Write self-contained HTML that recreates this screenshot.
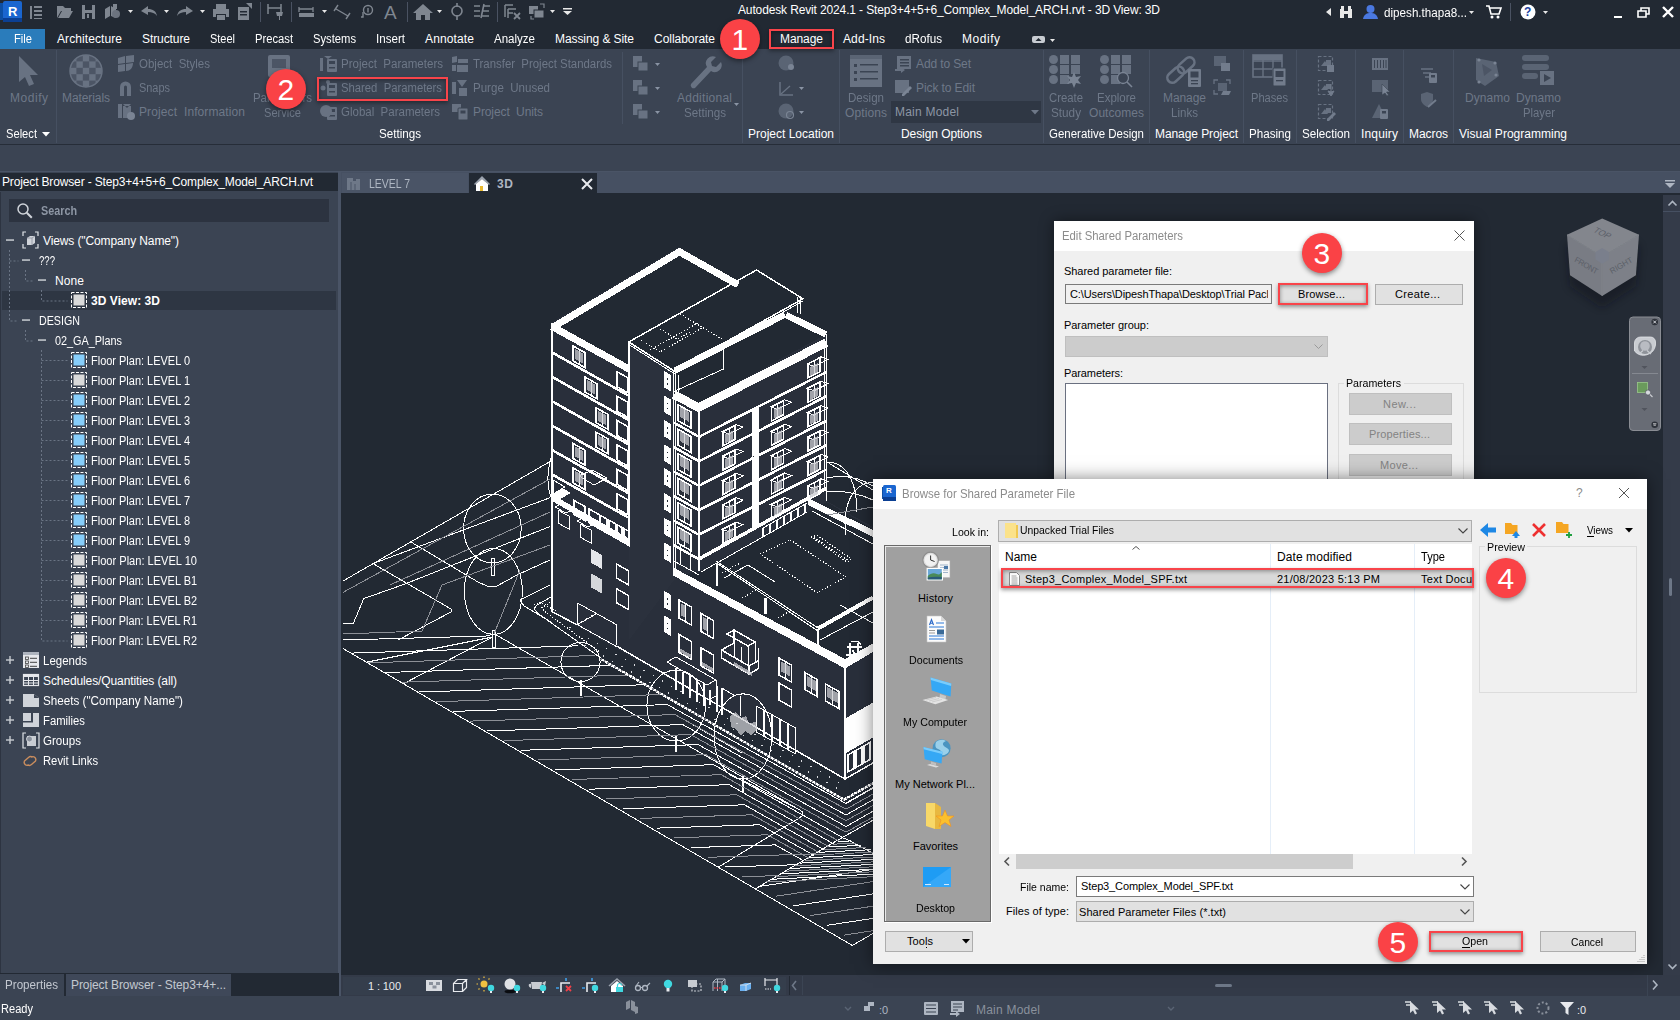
<!DOCTYPE html>
<html><head><meta charset="utf-8"><title>Autodesk Revit</title><style>
html,body{margin:0;padding:0;background:#222933;}
body{width:1680px;height:1020px;overflow:hidden;position:relative;font-family:"Liberation Sans",sans-serif;}
.t{position:absolute;white-space:pre;display:block;}
.b{position:absolute;display:block;box-sizing:border-box;}
</style></head><body>
<!-- p_top -->
<div class="b" style="left:0px;top:0px;width:1680px;height:49px;background:#222933;"></div>
<svg class="b" style="left:0px;top:0px;" width="24" height="26" viewBox="0 0 24 26"><rect x="0" y="3" width="5" height="17" fill="#0d4fa3"/><rect x="3" y="1" width="19" height="21" rx="2" fill="#1a66d0"/><rect x="3" y="18" width="19" height="4" fill="#0b3f93"/></svg>
<span class="t " style="left:8px;top:2.5px;font-size:13px;line-height:17px;color:#fff;font-weight:bold;">R</span>
<svg class="b" style="left:0px;top:0px;" width="700" height="27" viewBox="0 0 700 27"><rect x="30" y="6" width="2" height="13" fill="#7f8690"/><rect x="34" y="6" width="8" height="2" fill="#7f8690"/><rect x="34" y="10" width="8" height="2" fill="#7f8690"/><rect x="34" y="14" width="8" height="2" fill="#7f8690"/><rect x="34" y="18" width="8" height="1" fill="#7f8690"/><path d="M57 6h6l2 2h6v3h-10l-4 7z M58 18l4-7h11l-4 7z" fill="#7f8690"/><path d="M82 5h13v14h-13z" fill="#7f8690"/><rect x="85" y="5" width="7" height="5" fill="#222933"/><rect x="85" y="13" width="7" height="6" fill="#222933"/><rect x="87" y="14" width="2" height="4" fill="#7f8690"/><path d="M105 9l5-3v10l-5 3z M111 6l5 3v9l-5-2z M113 4h4v5h-4z" fill="#7f8690"/><circle cx="116" cy="14" r="4" fill="#6c737f"/><path d="M128 10h5l-2.500 3z" fill="#e8e8e8"/><path d="M141 11l7-5v3c5 0 8 2 9 7c-2-3-5-4-9-4v3z" fill="#7f8690"/><path d="M164 10h5l-2.500 3z" fill="#e8e8e8"/><path d="M193 11l-7-5v3c-5 0-8 2-9 7c2-3 5-4 9-4v3z" fill="#7f8690"/><path d="M200 10h5l-2.500 3z" fill="#e8e8e8"/><path d="M216 4h10v5h-10z M213 9h16v8h-3v-3h-10v3h-3z M217 15h8v5h-8z" fill="#7f8690"/><path d="M238 7h11v13h-11z" fill="#7f8690"/><path d="M246 3h6v6z" fill="#7f8690"/><rect x="240" y="11" width="7" height="1.500" fill="#222933"/><rect x="240" y="14" width="7" height="1.500" fill="#222933"/><rect x="260" y="2" width="1" height="20" fill="#4a5262"/><path d="M268 4v10M281 4v10M268 8h13" stroke="#7f8690" stroke-width="1.500" fill="none"/><path d="M276 12h7l-1 4h-2v4h-1v-4h-2z" fill="#7f8690"/><rect x="291" y="2" width="1" height="20" fill="#4a5262"/><path d="M299 7v5M313 7v5M299 9h14" stroke="#7f8690" stroke-width="1.300" fill="none"/><rect x="299" y="13" width="15" height="4" fill="#7f8690"/><path d="M322 10h5l-2.500 3z" fill="#e8e8e8"/><path d="M336 9l12 7M338 5l-4 6M350 13l-4 6" stroke="#7f8690" stroke-width="1.400" fill="none"/><circle cx="368" cy="10" r="4.500" fill="none" stroke="#7f8690" stroke-width="1.400"/><path d="M363 12v5h-2" stroke="#7f8690" stroke-width="1.400" fill="none"/><rect x="367.300" y="8" width="1.400" height="4.500" fill="#7f8690"/></svg>
<span class="t " style="left:384px;top:0.5px;font-size:19px;line-height:23px;color:#7f8690;letter-spacing:1.326px;">A</span>
<svg class="b" style="left:0px;top:0px;" width="700" height="27" viewBox="0 0 700 27"><rect x="407" y="2" width="1" height="20" fill="#4a5262"/><path d="M413 13l10-9l10 9h-3v7h-5v-5h-4v5h-5v-7z" fill="#7f8690"/><path d="M437 10h5l-2.500 3z" fill="#e8e8e8"/><circle cx="457" cy="11" r="5" fill="none" stroke="#7f8690" stroke-width="1.600"/><path d="M457 3v4M457 15v5" stroke="#7f8690" stroke-width="1.600"/><path d="M474 6h6M474 11h6M474 16h6M483 6h7M482 11h7M481 16h8M484 4l-3 14" stroke="#7f8690" stroke-width="1.600" fill="none"/><rect x="497" y="2" width="1" height="20" fill="#4a5262"/><path d="M505 5v12M505 5h8M508 9h8M508 13h5M508 9v9" stroke="#7f8690" stroke-width="1.500" fill="none"/><path d="M514 13l6 6M520 13l-6 6" stroke="#7f8690" stroke-width="1.800"/><rect x="529" y="6" width="9" height="8" fill="#7f8690"/><rect x="534" y="10" width="10" height="8" fill="#7f8690" stroke="#222933" stroke-width="1"/><path d="M540 4h4v4M531 16v3h3" stroke="#7f8690" stroke-width="1.200" fill="none"/><path d="M550 10h5l-2.500 3z" fill="#e8e8e8"/><rect x="563" y="8" width="9" height="1.500" fill="#e8e8e8"/><path d="M563 11h9l-4.500 4z" fill="#e8e8e8"/></svg>
<span class="t " style="left:738px;top:2px;font-size:12px;line-height:16px;color:#fff;letter-spacing:-0.136px;">Autodesk Revit 2024.1 - Step3+4+5+6_Complex_Model_ARCH.rvt - 3D View: 3D</span>
<svg class="b" style="left:0px;top:0px;" width="1680" height="27" viewBox="0 0 1680 27"><path d="M1331 8v8l-5-4z" fill="#e8e8e8"/><path d="M1340 9h4v9h-4z M1348 9h4v9h-4z M1341 6h3v3h-3z M1348 6h3v3h-3z M1344 11h4v3h-4z" fill="#e8e8e8"/><circle cx="1370.500" cy="9" r="4" fill="#4a78e0"/><path d="M1363 19c1-5 4-6 7.500-6s6.500 1 7.500 6z" fill="#4a78e0"/><path d="M1469 11h5l-2.500 3z" fill="#e8e8e8"/><path d="M1486 6h3l2 8h8l2-6h-11" stroke="#fff" stroke-width="1.600" fill="none"/><circle cx="1492" cy="17" r="1.500" fill="#fff"/><circle cx="1498" cy="17" r="1.500" fill="#fff"/><rect x="1510" y="3" width="1" height="18" fill="#4a5262"/><circle cx="1528" cy="12" r="7.500" fill="#fff"/><path d="M1543 11h5l-2.500 3z" fill="#e8e8e8"/><rect x="1614" y="16" width="8" height="2" fill="#fff"/><path d="M1638 11h8v6h-8z M1641 11v-3h8v6h-3" stroke="#fff" stroke-width="1.600" fill="none"/><path d="M1663 7l10 10M1673 7l-10 10" stroke="#fff" stroke-width="2.400"/></svg>
<span class="t " style="left:1524px;top:4px;font-size:12px;line-height:16px;color:#1a3fa0;font-weight:bold;">?</span>
<span class="t " style="left:1384px;top:5px;font-size:12px;line-height:16px;color:#fff;transform:scaleX(0.9719);transform-origin:0 50%;">dipesh.thapa8...</span>
<div class="b" style="left:0px;top:29px;width:45px;height:20px;background:#2a7cbb;"></div>
<span class="t " style="left:14px;top:31px;font-size:12px;line-height:16px;color:#fff;transform:scaleX(0.9309);transform-origin:0 50%;">File</span>
<span class="t " style="left:57px;top:31px;font-size:12px;line-height:16px;color:#fff;letter-spacing:0.089px;">Architecture</span>
<span class="t " style="left:142px;top:31px;font-size:12px;line-height:16px;color:#fff;letter-spacing:-0.086px;">Structure</span>
<span class="t " style="left:210px;top:31px;font-size:12px;line-height:16px;color:#fff;transform:scaleX(0.9140);transform-origin:0 50%;">Steel</span>
<span class="t " style="left:255px;top:31px;font-size:12px;line-height:16px;color:#fff;transform:scaleX(0.9341);transform-origin:0 50%;">Precast</span>
<span class="t " style="left:313px;top:31px;font-size:12px;line-height:16px;color:#fff;transform:scaleX(0.9346);transform-origin:0 50%;">Systems</span>
<span class="t " style="left:376px;top:31px;font-size:12px;line-height:16px;color:#fff;transform:scaleX(0.9663);transform-origin:0 50%;">Insert</span>
<span class="t " style="left:425px;top:31px;font-size:12px;line-height:16px;color:#fff;letter-spacing:0.137px;">Annotate</span>
<span class="t " style="left:494px;top:31px;font-size:12px;line-height:16px;color:#fff;transform:scaleX(0.9604);transform-origin:0 50%;">Analyze</span>
<span class="t " style="left:555px;top:31px;font-size:12px;line-height:16px;color:#fff;letter-spacing:-0.079px;">Massing &amp; Site</span>
<span class="t " style="left:654px;top:31px;font-size:12px;line-height:16px;color:#fff;letter-spacing:-0.037px;">Collaborate</span>
<span class="t " style="left:780px;top:31px;font-size:12px;line-height:16px;color:#fff;letter-spacing:-0.073px;">Manage</span>
<span class="t " style="left:843px;top:31px;font-size:12px;line-height:16px;color:#fff;letter-spacing:0.107px;">Add-Ins</span>
<span class="t " style="left:905px;top:31px;font-size:12px;line-height:16px;color:#fff;transform:scaleX(0.9731);transform-origin:0 50%;">dRofus</span>
<span class="t " style="left:962px;top:31px;font-size:12px;line-height:16px;color:#fff;letter-spacing:0.531px;">Modify</span>
<svg class="b" style="left:1030px;top:32px;" width="30" height="14" viewBox="0 0 30 14"><rect x="2" y="4" width="13" height="7" rx="2" fill="#c8ccd2"/><path d="M5.500 9l3-3l3 3z" fill="#222933"/><path d="M20 7h5l-2.500 3z" fill="#e8e8e8"/></svg>
<div class="b" style="left:0px;top:49px;width:1680px;height:96px;background:#3b4453;"></div>
<div class="b" style="left:0px;top:144px;width:1680px;height:1px;background:#262d38;"></div>
<div class="b" style="left:0px;top:145px;width:1680px;height:27px;background:#3b4453;"></div>
<div class="b" style="left:0px;top:171px;width:1680px;height:1px;background:#4a5466;"></div>
<div class="b" style="left:56px;top:50px;width:1px;height:93px;background:#465061;"></div>
<div class="b" style="left:742px;top:50px;width:1px;height:93px;background:#465061;"></div>
<div class="b" style="left:839px;top:50px;width:1px;height:93px;background:#465061;"></div>
<div class="b" style="left:1043px;top:50px;width:1px;height:93px;background:#465061;"></div>
<div class="b" style="left:1149px;top:50px;width:1px;height:93px;background:#465061;"></div>
<div class="b" style="left:1243px;top:50px;width:1px;height:93px;background:#465061;"></div>
<div class="b" style="left:1296px;top:50px;width:1px;height:93px;background:#465061;"></div>
<div class="b" style="left:1355px;top:50px;width:1px;height:93px;background:#465061;"></div>
<div class="b" style="left:1403px;top:50px;width:1px;height:93px;background:#465061;"></div>
<div class="b" style="left:1453px;top:50px;width:1px;height:93px;background:#465061;"></div>
<div class="b" style="left:622px;top:52px;width:1px;height:72px;background:#465061;"></div>
<span class="t " style="left:6px;top:126px;font-size:12px;line-height:16px;color:#fff;transform:scaleX(0.9295);transform-origin:0 50%;">Select</span>
<svg class="b" style="left:41px;top:131px;" width="10" height="6" viewBox="0 0 10 6"><path d="M1 1h8l-4 4.500z" fill="#fff"/></svg>
<span class="t " style="left:379px;top:126px;font-size:12px;line-height:16px;color:#fff;transform:scaleX(0.9686);transform-origin:0 50%;">Settings</span>
<span class="t " style="left:748px;top:126px;font-size:12px;line-height:16px;color:#fff;letter-spacing:-0.003px;">Project Location</span>
<span class="t " style="left:901px;top:126px;font-size:12px;line-height:16px;color:#fff;letter-spacing:-0.080px;">Design Options</span>
<span class="t " style="left:1049px;top:126px;font-size:12px;line-height:16px;color:#fff;transform:scaleX(0.9559);transform-origin:0 50%;">Generative Design</span>
<span class="t " style="left:1155px;top:126px;font-size:12px;line-height:16px;color:#fff;letter-spacing:-0.081px;">Manage Project</span>
<span class="t " style="left:1249px;top:126px;font-size:12px;line-height:16px;color:#fff;transform:scaleX(0.9685);transform-origin:0 50%;">Phasing</span>
<span class="t " style="left:1302px;top:126px;font-size:12px;line-height:16px;color:#fff;transform:scaleX(0.9723);transform-origin:0 50%;">Selection</span>
<span class="t " style="left:1361px;top:126px;font-size:12px;line-height:16px;color:#fff;letter-spacing:0.164px;">Inquiry</span>
<span class="t " style="left:1409px;top:126px;font-size:12px;line-height:16px;color:#fff;letter-spacing:-0.068px;">Macros</span>
<span class="t " style="left:1459px;top:126px;font-size:12px;line-height:16px;color:#fff;letter-spacing:0.010px;">Visual Programming</span>
<span class="t " style="left:10px;top:90px;font-size:12px;line-height:16px;color:#6e7888;letter-spacing:0.531px;">Modify</span>
<span class="t " style="left:62px;top:90px;font-size:12px;line-height:16px;color:#6e7888;letter-spacing:-0.085px;">Materials</span>
<span class="t " style="left:139px;top:56px;font-size:12px;line-height:16px;color:#6e7888;transform:scaleX(0.9591);transform-origin:0 50%;">Object  Styles</span>
<span class="t " style="left:139px;top:80px;font-size:12px;line-height:16px;color:#6e7888;transform:scaleX(0.9111);transform-origin:0 50%;">Snaps</span>
<span class="t " style="left:139px;top:104px;font-size:12px;line-height:16px;color:#6e7888;letter-spacing:0.103px;">Project  Information</span>
<span class="t " style="left:253px;top:90px;font-size:12px;line-height:16px;color:#6e7888;transform:scaleX(0.9513);transform-origin:0 50%;">Parameters</span>
<span class="t " style="left:264px;top:105px;font-size:12px;line-height:16px;color:#6e7888;transform:scaleX(0.9247);transform-origin:0 50%;">Service</span>
<span class="t " style="left:341px;top:56px;font-size:12px;line-height:16px;color:#6e7888;transform:scaleX(0.9619);transform-origin:0 50%;">Project  Parameters</span>
<span class="t " style="left:341px;top:80px;font-size:12px;line-height:16px;color:#6e7888;transform:scaleX(0.9405);transform-origin:0 50%;">Shared  Parameters</span>
<span class="t " style="left:341px;top:104px;font-size:12px;line-height:16px;color:#6e7888;transform:scaleX(0.9577);transform-origin:0 50%;">Global  Parameters</span>
<span class="t " style="left:473px;top:56px;font-size:12px;line-height:16px;color:#6e7888;transform:scaleX(0.9502);transform-origin:0 50%;">Transfer  Project Standards</span>
<span class="t " style="left:473px;top:80px;font-size:12px;line-height:16px;color:#6e7888;transform:scaleX(0.9619);transform-origin:0 50%;">Purge  Unused</span>
<span class="t " style="left:473px;top:104px;font-size:12px;line-height:16px;color:#6e7888;letter-spacing:-0.104px;">Project  Units</span>
<span class="t " style="left:677px;top:90px;font-size:12px;line-height:16px;color:#6e7888;letter-spacing:0.255px;">Additional</span>
<span class="t " style="left:684px;top:105px;font-size:12px;line-height:16px;color:#6e7888;transform:scaleX(0.9686);transform-origin:0 50%;">Settings</span>
<span class="t " style="left:848px;top:90px;font-size:12px;line-height:16px;color:#6e7888;transform:scaleX(0.9638);transform-origin:0 50%;">Design</span>
<span class="t " style="left:845px;top:105px;font-size:12px;line-height:16px;color:#6e7888;letter-spacing:0.107px;">Options</span>
<span class="t " style="left:916px;top:56px;font-size:12px;line-height:16px;color:#6e7888;letter-spacing:-0.115px;">Add to Set</span>
<span class="t " style="left:916px;top:80px;font-size:12px;line-height:16px;color:#6e7888;letter-spacing:-0.093px;">Pick to Edit</span>
<span class="t " style="left:1049px;top:90px;font-size:12px;line-height:16px;color:#6e7888;transform:scaleX(0.9440);transform-origin:0 50%;">Create</span>
<span class="t " style="left:1051px;top:105px;font-size:12px;line-height:16px;color:#6e7888;transform:scaleX(0.9777);transform-origin:0 50%;">Study</span>
<span class="t " style="left:1097px;top:90px;font-size:12px;line-height:16px;color:#6e7888;transform:scaleX(0.9585);transform-origin:0 50%;">Explore</span>
<span class="t " style="left:1089px;top:105px;font-size:12px;line-height:16px;color:#6e7888;letter-spacing:0.045px;">Outcomes</span>
<span class="t " style="left:1163px;top:90px;font-size:12px;line-height:16px;color:#6e7888;letter-spacing:-0.073px;">Manage</span>
<span class="t " style="left:1171px;top:105px;font-size:12px;line-height:16px;color:#6e7888;transform:scaleX(0.9638);transform-origin:0 50%;">Links</span>
<span class="t " style="left:1251px;top:90px;font-size:12px;line-height:16px;color:#6e7888;transform:scaleX(0.9244);transform-origin:0 50%;">Phases</span>
<span class="t " style="left:1465px;top:90px;font-size:12px;line-height:16px;color:#6e7888;letter-spacing:0.063px;">Dynamo</span>
<span class="t " style="left:1516px;top:90px;font-size:12px;line-height:16px;color:#6e7888;letter-spacing:0.063px;">Dynamo</span>
<span class="t " style="left:1523px;top:105px;font-size:12px;line-height:16px;color:#6e7888;transform:scaleX(0.9408);transform-origin:0 50%;">Player</span>
<div class="b" style="left:891px;top:101px;width:150px;height:22px;background:#2f3744;"></div>
<span class="t " style="left:895px;top:104px;font-size:12px;line-height:16px;color:#8d96a4;letter-spacing:0.219px;">Main Model</span>
<svg class="b" style="left:1030px;top:109px;" width="10" height="6" viewBox="0 0 10 6"><path d="M1 1h8l-4 4.500z" fill="#6e7888"/></svg>
<!-- p_ribicons -->
<svg class="b" style="left:0px;top:49px;" width="1680" height="96" viewBox="0 49 1680 96"><path d="M19 56v26l6-5l4 9l5-2l-4-9h8z" fill="#687282"/><circle cx="86" cy="71" r="16" fill="#687282"/><rect x="70" y="61.4" width="6.4" height="6.4" fill="#4c5565" clip-path="url(#sph)"/><rect x="70" y="74.2" width="6.4" height="6.4" fill="#4c5565" clip-path="url(#sph)"/><rect x="76.4" y="55" width="6.4" height="6.4" fill="#4c5565" clip-path="url(#sph)"/><rect x="76.4" y="67.8" width="6.4" height="6.4" fill="#4c5565" clip-path="url(#sph)"/><rect x="76.4" y="80.6" width="6.4" height="6.4" fill="#4c5565" clip-path="url(#sph)"/><rect x="82.8" y="61.4" width="6.4" height="6.4" fill="#4c5565" clip-path="url(#sph)"/><rect x="82.8" y="74.2" width="6.4" height="6.4" fill="#4c5565" clip-path="url(#sph)"/><rect x="89.2" y="55" width="6.4" height="6.4" fill="#4c5565" clip-path="url(#sph)"/><rect x="89.2" y="67.8" width="6.4" height="6.4" fill="#4c5565" clip-path="url(#sph)"/><rect x="89.2" y="80.6" width="6.4" height="6.4" fill="#4c5565" clip-path="url(#sph)"/><rect x="95.6" y="61.4" width="6.4" height="6.4" fill="#4c5565" clip-path="url(#sph)"/><rect x="95.6" y="74.2" width="6.4" height="6.4" fill="#4c5565" clip-path="url(#sph)"/><defs><clipPath id="sph"><circle cx="86" cy="71" r="16"/></clipPath></defs><circle cx="86" cy="71" r="16" fill="none" stroke="#687282" stroke-width="1.500"/><path d="M118 58l7-2v7l-7 1z M126 56l8-1v7l-8 1z M118 65l7-1v7l-7 1z M126 64l7-1c0 5-3 8-7 8z" fill="#687282"/><path d="M120 96v-9a5 5 0 0 1 11 0v9h-4v-9a1.500 1.500 0 0 0-3 0v9z" fill="#687282"/><path d="M118 104h4v14h-4z M123 106h8v12h-8z M123 104l4 4l4-4z" fill="#687282"/><circle cx="131" cy="116" r="4" fill="#7a8494"/><rect x="268" y="55" width="22" height="22" rx="2" fill="#687282"/><rect x="272" y="59" width="14" height="9" fill="#4c5565"/><rect x="327" y="59" width="10" height="13" rx="1" fill="#687282"/><rect x="329" y="61" width="6" height="3" fill="#3b4453"/><rect x="329" y="67" width="6" height="1.500" fill="#3b4453"/><rect x="327" y="83" width="10" height="13" rx="1" fill="#687282"/><rect x="329" y="85" width="6" height="3" fill="#3b4453"/><rect x="329" y="91" width="6" height="1.500" fill="#3b4453"/><rect x="327" y="107" width="10" height="13" rx="1" fill="#687282"/><rect x="329" y="109" width="6" height="3" fill="#3b4453"/><rect x="329" y="115" width="6" height="1.500" fill="#3b4453"/><path d="M320 58h3v13h-3z M324 56l4 3l4-3z" fill="#687282"/><circle cx="323" cy="88" r="2.500" fill="#687282"/><circle cx="328" cy="82" r="2" fill="#687282"/><circle cx="326" cy="111" r="6" fill="#687282"/><path d="M452 57l5-1v6l-5 1z M458 59h10v4h-10z M457 65h11v7h-11z M452 65h4v6h-4z" fill="#687282"/><path d="M452 82h4v12h-4z M457 80h10l-5 7z M459 88h8v8h-8z" fill="#687282"/><rect x="452" y="104" width="9" height="8" fill="#687282"/><rect x="458" y="108" width="10" height="12" rx="1" fill="#687282" stroke="#3b4453" stroke-width="1"/><rect x="460.500" y="110.500" width="5" height="3" fill="#3b4453"/><rect x="633" y="56" width="9" height="11" fill="#687282"/><rect x="638" y="62" width="10" height="9" fill="#687282" stroke="#3b4453" stroke-width="1"/><path d="M655 63h5l-2.500 3z" fill="#8a94a4"/><rect x="633" y="80" width="9" height="11" fill="#687282"/><rect x="638" y="86" width="10" height="9" fill="#687282" stroke="#3b4453" stroke-width="1"/><path d="M655 87h5l-2.500 3z" fill="#8a94a4"/><rect x="633" y="104" width="9" height="11" fill="#687282"/><rect x="638" y="110" width="10" height="9" fill="#687282" stroke="#3b4453" stroke-width="1"/><path d="M655 111h5l-2.500 3z" fill="#8a94a4"/><path d="M691 84l16-17a7 7 0 0 1 9-10l-5 5l1 4l4 1l5-5a7 7 0 0 1-10 9l-16 17a3 3 0 0 1-4-4z" fill="#687282"/><path d="M734 103h5l-2.500 3z" fill="#8a94a4"/><circle cx="786" cy="63" r="7.500" fill="#5a6474"/><circle cx="791" cy="67" r="3" fill="#7a8494"/><path d="M780 82v13h13" stroke="#687282" stroke-width="1.500" fill="none"/><path d="M781 94l9-8" stroke="#687282" stroke-width="1.300"/><path d="M799 87h5l-2.500 3z" fill="#8a94a4"/><circle cx="786" cy="111" r="7.500" fill="#5a6474"/><circle cx="790" cy="115" r="3.500" fill="none" stroke="#7a8494" stroke-width="1.200"/><path d="M799 111h5l-2.500 3z" fill="#8a94a4"/><rect x="850" y="55" width="32" height="32" fill="#687282"/><rect x="850" y="55" width="32" height="4" fill="#5a6474"/><rect x="854" y="64" width="3" height="3" fill="#3b4453"/><rect x="860" y="64" width="18" height="1.500" fill="#3b4453"/><rect x="854" y="71" width="3" height="3" fill="#3b4453"/><rect x="860" y="71" width="18" height="1.500" fill="#3b4453"/><rect x="854" y="78" width="3" height="3" fill="#3b4453"/><rect x="860" y="78" width="18" height="1.500" fill="#3b4453"/><rect x="897" y="56" width="14" height="13" fill="#687282"/><rect x="900" y="59" width="9" height="1.500" fill="#3b4453"/><rect x="900" y="62" width="9" height="1.500" fill="#3b4453"/><rect x="900" y="65" width="9" height="1.500" fill="#3b4453"/><path d="M895 69h6v-2l4 3l-4 3v-2h-6z" fill="#687282"/><rect x="895" y="80" width="14" height="13" fill="#687282"/><path d="M902 94l8-8l2 2l-8 8h-2z" fill="#7a8494"/><circle cx="1053.5" cy="59.5" r="4.500" fill="#687282"/><rect x="1060" y="55" width="9" height="9" fill="#687282"/><rect x="1071" y="55" width="9" height="9" fill="#687282"/><circle cx="1053.5" cy="69.5" r="4.500" fill="#687282"/><rect x="1060" y="65" width="9" height="9" fill="#687282"/><rect x="1071" y="65" width="9" height="9" fill="#687282"/><circle cx="1053.5" cy="79.5" r="4.500" fill="#687282"/><rect x="1060" y="75" width="9" height="9" fill="#687282"/><path d="M1074 72l2 5l5-1l-3 4l3 4l-5-1l-2 5l-2-5l-5 1l3-4l-3-4l5 1z" fill="#7a8494"/><circle cx="1104.5" cy="59.5" r="4.500" fill="#687282"/><rect x="1111" y="55" width="9" height="9" fill="#687282"/><rect x="1122" y="55" width="9" height="9" fill="#687282"/><circle cx="1104.5" cy="69.5" r="4.500" fill="#687282"/><rect x="1111" y="65" width="9" height="9" fill="#687282"/><rect x="1122" y="65" width="9" height="9" fill="#687282"/><circle cx="1104.5" cy="79.5" r="4.500" fill="#687282"/><rect x="1111" y="75" width="9" height="9" fill="#687282"/><circle cx="1123" cy="78" r="5.500" fill="#3b4453" stroke="#7a8494" stroke-width="1.300"/><path d="M1127 82l5 5" stroke="#7a8494" stroke-width="1.600"/><g transform="rotate(-42 1182 69)" fill="none" stroke="#687282" stroke-width="2.600"><rect x="1164" y="64" width="19" height="10" rx="5"/><rect x="1178" y="64" width="19" height="10" rx="5"/></g><rect x="1188" y="69" width="13" height="18" rx="1" fill="#727c8c"/><rect x="1190.500" y="71.500" width="8" height="6" fill="#3b4453"/><rect x="1191" y="80" width="7" height="1.300" fill="#3b4453"/><rect x="1191" y="83" width="7" height="1.300" fill="#3b4453"/><rect x="1214" y="56" width="12" height="10" fill="#5a6474"/><rect x="1221" y="63" width="9" height="8" fill="#727c8c"/><path d="M1214 84v-4h4M1226 80h4v4M1214 90v4h4" stroke="#687282" stroke-width="1.300" fill="none"/><rect x="1218" y="83" width="9" height="8" fill="#5a6474"/><path d="M1223 91h8l-2 4h-8z" fill="#727c8c"/><rect x="1253" y="55" width="29" height="22" fill="none" stroke="#687282" stroke-width="1.600"/><path d="M1253 61h29M1253 69h29M1263 55v22M1273 55v22" stroke="#687282" stroke-width="1.400"/><rect x="1253" y="55" width="29" height="5" fill="#687282"/><rect x="1273" y="68" width="13" height="18" rx="1" fill="#727c8c" stroke="#3b4453" stroke-width="1"/><rect x="1275.500" y="71" width="8" height="6" fill="#3b4453"/><rect x="1276" y="80" width="7" height="1.300" fill="#3b4453"/><rect x="1318.500" y="56.5" width="14" height="14" fill="none" stroke="#687282" stroke-width="1.200" stroke-dasharray="3 2"/><path d="M1321 66l4-5l3 5z" fill="#687282"/><rect x="1326" y="60" width="5" height="5" fill="#687282"/><rect x="1318.500" y="80.5" width="14" height="14" fill="none" stroke="#687282" stroke-width="1.200" stroke-dasharray="3 2"/><path d="M1321 90l4-5l3 5z" fill="#687282"/><rect x="1326" y="84" width="5" height="5" fill="#687282"/><rect x="1318.500" y="104.5" width="14" height="14" fill="none" stroke="#687282" stroke-width="1.200" stroke-dasharray="3 2"/><path d="M1321 114l4-5l3 5z" fill="#687282"/><rect x="1326" y="108" width="5" height="5" fill="#687282"/><rect x="1327" y="65" width="7" height="7" fill="#727c8c"/><path d="M1331 84v8l-3-1l3 5l3-5l-3 1" fill="#727c8c" stroke="#727c8c"/><path d="M1327 119l7-7l2 2l-7 7h-2z" fill="#727c8c"/><rect x="1372" y="58" width="16" height="12" fill="#687282"/><rect x="1374" y="60" width="1" height="8" fill="#3b4453"/><rect x="1377" y="60" width="1" height="8" fill="#3b4453"/><rect x="1380" y="60" width="1" height="8" fill="#3b4453"/><rect x="1383" y="60" width="1" height="8" fill="#3b4453"/><rect x="1385.5" y="60" width="1" height="8" fill="#3b4453"/><rect x="1372" y="80" width="16" height="12" fill="#5a6474"/><path d="M1382 84v11l3-2l2 3l1.500-1l-2-3h3.500z" fill="#7a8494" stroke="#3b4453" stroke-width=".6"/><path d="M1372 118l7-14l4 8v6z" fill="#5a6474"/><rect x="1380" y="109" width="8" height="10" rx="1" fill="#727c8c"/><rect x="1382" y="111" width="4" height="2.500" fill="#3b4453"/><path d="M1421 69h12M1423 73h8M1425 77h4" stroke="#687282" stroke-width="1.500"/><rect x="1429" y="73" width="8" height="10" rx="1" fill="#727c8c"/><rect x="1431" y="75" width="4" height="2.500" fill="#3b4453"/><path d="M1427 92l6 2v5c0 4-3 6-6 8c-3-2-6-4-6-8v-5z" fill="#5a6474"/><path d="M1428 107l8-7" stroke="#727c8c" stroke-width="2"/><path d="M1476 58l20 4l3 14l-14 10l-9-6z" fill="#5a6474"/><path d="M1482 64l10 6l-8 6z" fill="#4c5565"/><circle cx="1479" cy="60" r="1.600" fill="#7a8494"/><circle cx="1495" cy="63" r="1.600" fill="#7a8494"/><circle cx="1496" cy="75" r="1.600" fill="#7a8494"/><circle cx="1479" cy="82" r="1.600" fill="#7a8494"/><rect x="1522" y="55" width="27" height="6" rx="3" fill="#5a6474"/><rect x="1522" y="64" width="27" height="6" rx="3" fill="#5a6474"/><rect x="1522" y="73" width="16" height="6" rx="3" fill="#5a6474"/><rect x="1540" y="71" width="14" height="14" fill="#687282"/><path d="M1544 74v8l7-4z" fill="#3b4453"/></svg>
<!-- p_left -->
<div class="b" style="left:0px;top:172px;width:339px;height:801px;background:#3b4453;"></div>
<div class="b" style="left:0px;top:173px;width:338px;height:18px;background:#222933;"></div>
<div class="b" style="left:0px;top:192px;width:1px;height:781px;background:#2d3441;"></div>
<div class="b" style="left:338px;top:172px;width:3px;height:824px;background:#4a5466;"></div>
<span class="t " style="left:2px;top:174px;font-size:12px;line-height:16px;color:#fff;letter-spacing:-0.147px;">Project Browser - Step3+4+5+6_Complex_Model_ARCH.rvt</span>
<div class="b" style="left:9px;top:199px;width:320px;height:23px;background:#2c3340;"></div>
<svg class="b" style="left:16px;top:202px;" width="18" height="18" viewBox="0 0 18 18"><circle cx="7" cy="7" r="5" fill="none" stroke="#d0d4da" stroke-width="1.500"/><path d="M10.800 10.800l5 5" stroke="#d0d4da" stroke-width="2"/></svg>
<span class="t " style="left:41px;top:203px;font-size:12px;line-height:16px;color:#8e97a5;transform:scaleX(0.8994);transform-origin:0 50%;font-weight:bold;">Search</span>
<div class="b" style="left:2px;top:291px;width:334px;height:19px;background:#2e3643;"></div>
<span class="t " style="left:91px;top:353px;font-size:12px;line-height:16px;color:#fff;transform:scaleX(0.9143);transform-origin:0 50%;">Floor Plan: LEVEL 0</span>
<span class="t " style="left:91px;top:373px;font-size:12px;line-height:16px;color:#fff;transform:scaleX(0.9143);transform-origin:0 50%;">Floor Plan: LEVEL 1</span>
<span class="t " style="left:91px;top:393px;font-size:12px;line-height:16px;color:#fff;transform:scaleX(0.9143);transform-origin:0 50%;">Floor Plan: LEVEL 2</span>
<span class="t " style="left:91px;top:413px;font-size:12px;line-height:16px;color:#fff;transform:scaleX(0.9143);transform-origin:0 50%;">Floor Plan: LEVEL 3</span>
<span class="t " style="left:91px;top:433px;font-size:12px;line-height:16px;color:#fff;transform:scaleX(0.9143);transform-origin:0 50%;">Floor Plan: LEVEL 4</span>
<span class="t " style="left:91px;top:453px;font-size:12px;line-height:16px;color:#fff;transform:scaleX(0.9143);transform-origin:0 50%;">Floor Plan: LEVEL 5</span>
<span class="t " style="left:91px;top:473px;font-size:12px;line-height:16px;color:#fff;transform:scaleX(0.9143);transform-origin:0 50%;">Floor Plan: LEVEL 6</span>
<span class="t " style="left:91px;top:493px;font-size:12px;line-height:16px;color:#fff;transform:scaleX(0.9143);transform-origin:0 50%;">Floor Plan: LEVEL 7</span>
<span class="t " style="left:91px;top:513px;font-size:12px;line-height:16px;color:#fff;transform:scaleX(0.9143);transform-origin:0 50%;">Floor Plan: LEVEL 8</span>
<span class="t " style="left:91px;top:533px;font-size:12px;line-height:16px;color:#fff;transform:scaleX(0.9143);transform-origin:0 50%;">Floor Plan: LEVEL 9</span>
<span class="t " style="left:91px;top:553px;font-size:12px;line-height:16px;color:#fff;transform:scaleX(0.9221);transform-origin:0 50%;">Floor Plan: LEVEL 10</span>
<span class="t " style="left:91px;top:573px;font-size:12px;line-height:16px;color:#fff;transform:scaleX(0.9116);transform-origin:0 50%;">Floor Plan: LEVEL B1</span>
<span class="t " style="left:91px;top:593px;font-size:12px;line-height:16px;color:#fff;transform:scaleX(0.9116);transform-origin:0 50%;">Floor Plan: LEVEL B2</span>
<span class="t " style="left:91px;top:613px;font-size:12px;line-height:16px;color:#fff;transform:scaleX(0.9064);transform-origin:0 50%;">Floor Plan: LEVEL R1</span>
<span class="t " style="left:91px;top:633px;font-size:12px;line-height:16px;color:#fff;transform:scaleX(0.9064);transform-origin:0 50%;">Floor Plan: LEVEL R2</span>
<svg class="b" style="left:0px;top:192px;" width="339" height="781" viewBox="0 192 339 781"><rect x="6" y="239.3" width="8" height="1.500" fill="#c8ccd2"/><rect x="22" y="259.3" width="8" height="1.500" fill="#c8ccd2"/><rect x="38" y="279.3" width="8" height="1.500" fill="#c8ccd2"/><rect x="22" y="319.3" width="8" height="1.500" fill="#c8ccd2"/><rect x="38" y="339.3" width="8" height="1.500" fill="#c8ccd2"/><path d="M9.500 250v71h9" stroke="#6a7484" stroke-width="1" stroke-dasharray="2 2" fill="none"/><path d="M9.500 261h9" stroke="#6a7484" stroke-width="1" stroke-dasharray="2 2" fill="none"/><path d="M25.500 270v11h9" stroke="#6a7484" stroke-width="1" stroke-dasharray="2 2" fill="none"/><path d="M41.500 290v11h26" stroke="#6a7484" stroke-width="1" stroke-dasharray="2 2" fill="none"/><path d="M25.500 330v11h9" stroke="#6a7484" stroke-width="1" stroke-dasharray="2 2" fill="none"/><path d="M41.500 350v291h26" stroke="#6a7484" stroke-width="1" stroke-dasharray="2 2" fill="none"/><path d="M41.500 360.5 h26" stroke="#6a7484" stroke-width="1" stroke-dasharray="2 2" fill="none"/><path d="M41.500 380.5 h26" stroke="#6a7484" stroke-width="1" stroke-dasharray="2 2" fill="none"/><path d="M41.500 400.5 h26" stroke="#6a7484" stroke-width="1" stroke-dasharray="2 2" fill="none"/><path d="M41.500 420.5 h26" stroke="#6a7484" stroke-width="1" stroke-dasharray="2 2" fill="none"/><path d="M41.500 440.5 h26" stroke="#6a7484" stroke-width="1" stroke-dasharray="2 2" fill="none"/><path d="M41.500 460.5 h26" stroke="#6a7484" stroke-width="1" stroke-dasharray="2 2" fill="none"/><path d="M41.500 480.5 h26" stroke="#6a7484" stroke-width="1" stroke-dasharray="2 2" fill="none"/><path d="M41.500 500.5 h26" stroke="#6a7484" stroke-width="1" stroke-dasharray="2 2" fill="none"/><path d="M41.500 520.5 h26" stroke="#6a7484" stroke-width="1" stroke-dasharray="2 2" fill="none"/><path d="M41.500 540.5 h26" stroke="#6a7484" stroke-width="1" stroke-dasharray="2 2" fill="none"/><path d="M41.500 560.5 h26" stroke="#6a7484" stroke-width="1" stroke-dasharray="2 2" fill="none"/><path d="M41.500 580.5 h26" stroke="#6a7484" stroke-width="1" stroke-dasharray="2 2" fill="none"/><path d="M41.500 600.5 h26" stroke="#6a7484" stroke-width="1" stroke-dasharray="2 2" fill="none"/><path d="M41.500 620.5 h26" stroke="#6a7484" stroke-width="1" stroke-dasharray="2 2" fill="none"/><path d="M23 236v-4h3M35 232h3v4M23 244v4h3M35 248h3v-4" stroke="#e0e3e8" stroke-width="1.200" fill="none"/><path d="M27 238l3-2h5v7l-3 2h-5z" fill="#d0d4da"/><path d="M27 238h5v7M32 238l3-2" stroke="#8a919c" stroke-width=".8" fill="none"/><rect x="71.500" y="292.5" width="15" height="15" fill="none" stroke="#fff" stroke-width="1" stroke-dasharray="3 1.500"/><rect x="73.500" y="294.5" width="11" height="11" fill="#d9d9d9"/><rect x="71.500" y="352.5" width="15" height="15" fill="none" stroke="#fff" stroke-width="1" stroke-dasharray="3 1.500"/><rect x="73.500" y="354.5" width="11" height="11" fill="#87cefa"/><rect x="71.500" y="372.5" width="15" height="15" fill="none" stroke="#fff" stroke-width="1" stroke-dasharray="3 1.500"/><rect x="73.500" y="374.5" width="11" height="11" fill="#d9d9d9"/><rect x="71.500" y="392.5" width="15" height="15" fill="none" stroke="#fff" stroke-width="1" stroke-dasharray="3 1.500"/><rect x="73.500" y="394.5" width="11" height="11" fill="#87cefa"/><rect x="71.500" y="412.5" width="15" height="15" fill="none" stroke="#fff" stroke-width="1" stroke-dasharray="3 1.500"/><rect x="73.500" y="414.5" width="11" height="11" fill="#87cefa"/><rect x="71.500" y="432.5" width="15" height="15" fill="none" stroke="#fff" stroke-width="1" stroke-dasharray="3 1.500"/><rect x="73.500" y="434.5" width="11" height="11" fill="#87cefa"/><rect x="71.500" y="452.5" width="15" height="15" fill="none" stroke="#fff" stroke-width="1" stroke-dasharray="3 1.500"/><rect x="73.500" y="454.5" width="11" height="11" fill="#87cefa"/><rect x="71.500" y="472.5" width="15" height="15" fill="none" stroke="#fff" stroke-width="1" stroke-dasharray="3 1.500"/><rect x="73.500" y="474.5" width="11" height="11" fill="#87cefa"/><rect x="71.500" y="492.5" width="15" height="15" fill="none" stroke="#fff" stroke-width="1" stroke-dasharray="3 1.500"/><rect x="73.500" y="494.5" width="11" height="11" fill="#87cefa"/><rect x="71.500" y="512.5" width="15" height="15" fill="none" stroke="#fff" stroke-width="1" stroke-dasharray="3 1.500"/><rect x="73.500" y="514.5" width="11" height="11" fill="#87cefa"/><rect x="71.500" y="532.5" width="15" height="15" fill="none" stroke="#fff" stroke-width="1" stroke-dasharray="3 1.500"/><rect x="73.500" y="534.5" width="11" height="11" fill="#87cefa"/><rect x="71.500" y="552.5" width="15" height="15" fill="none" stroke="#fff" stroke-width="1" stroke-dasharray="3 1.500"/><rect x="73.500" y="554.5" width="11" height="11" fill="#d9d9d9"/><rect x="71.500" y="572.5" width="15" height="15" fill="none" stroke="#fff" stroke-width="1" stroke-dasharray="3 1.500"/><rect x="73.500" y="574.5" width="11" height="11" fill="#d9d9d9"/><rect x="71.500" y="592.5" width="15" height="15" fill="none" stroke="#fff" stroke-width="1" stroke-dasharray="3 1.500"/><rect x="73.500" y="594.5" width="11" height="11" fill="#d9d9d9"/><rect x="71.500" y="612.5" width="15" height="15" fill="none" stroke="#fff" stroke-width="1" stroke-dasharray="3 1.500"/><rect x="73.500" y="614.5" width="11" height="11" fill="#d9d9d9"/><rect x="71.500" y="632.5" width="15" height="15" fill="none" stroke="#fff" stroke-width="1" stroke-dasharray="3 1.500"/><rect x="73.500" y="634.5" width="11" height="11" fill="#d9d9d9"/><rect x="6" y="659.3" width="8" height="1.400" fill="#c8ccd2"/><rect x="9.3" y="656" width="1.400" height="8" fill="#c8ccd2"/><rect x="6" y="679.3" width="8" height="1.400" fill="#c8ccd2"/><rect x="9.3" y="676" width="1.400" height="8" fill="#c8ccd2"/><rect x="6" y="699.3" width="8" height="1.400" fill="#c8ccd2"/><rect x="9.3" y="696" width="1.400" height="8" fill="#c8ccd2"/><rect x="6" y="719.3" width="8" height="1.400" fill="#c8ccd2"/><rect x="9.3" y="716" width="1.400" height="8" fill="#c8ccd2"/><rect x="6" y="739.3" width="8" height="1.400" fill="#c8ccd2"/><rect x="9.3" y="736" width="1.400" height="8" fill="#c8ccd2"/><rect x="23" y="652" width="16" height="16" fill="#e6e8ec"/><rect x="23" y="652" width="16" height="3" fill="#aeb4be"/><rect x="25.500" y="657" width="3" height="2.500" fill="none" stroke="#444" stroke-width=".8"/><rect x="30" y="657.8" width="7" height="1" fill="#444"/><rect x="25.500" y="661" width="3" height="2.500" fill="none" stroke="#444" stroke-width=".8"/><rect x="30" y="661.8" width="7" height="1" fill="#444"/><rect x="25.500" y="665" width="3" height="2.500" fill="none" stroke="#444" stroke-width=".8"/><rect x="30" y="665.8" width="7" height="1" fill="#444"/><rect x="23.500" y="674.500" width="15" height="11" fill="#3b4453" stroke="#e6e8ec" stroke-width="1.200"/><rect x="23" y="674" width="16" height="3" fill="#e6e8ec"/><path d="M23 680.500h16M23 683h16M28.500 677v9M33.500 677v9" stroke="#e6e8ec" stroke-width="1"/><path d="M23 694h11l5 4v9h-16z" fill="#d0d4da"/><path d="M34 694v4h5z" fill="#3b4453"/><rect x="23" y="713" width="16" height="14" fill="#d0d4da"/><rect x="31" y="713" width="2" height="8" fill="#3b4453"/><rect x="23" y="721" width="10" height="1.500" fill="#3b4453"/><path d="M26 733h-3v15h3M36 733h3v15h-3" stroke="#e0e3e8" stroke-width="1.200" fill="none"/><rect x="27" y="736" width="9" height="10" fill="#c8ccd2"/><circle cx="29.500" cy="739" r="3" fill="#8a919c" stroke="#e0e3e8" stroke-width=".8"/><path d="M28 765a3 3 0 0 1-4-4l4-3.500a3 3 0 0 1 4 0M31 757a3 3 0 0 1 4 4l-4 3.500a3 3 0 0 1-4 0" transform="translate(0.500,0)" stroke="#c98d5e" stroke-width="1.400" fill="none"/></svg>
<span class="t " style="left:43px;top:233px;font-size:12px;line-height:16px;color:#fff;letter-spacing:-0.111px;">Views ("Company Name")</span>
<span class="t " style="left:39px;top:253px;font-size:12px;line-height:16px;color:#fff;transform:scaleX(0.7991);transform-origin:0 50%;">???</span>
<span class="t " style="left:55px;top:273px;font-size:12px;line-height:16px;color:#fff;letter-spacing:0.104px;">None</span>
<span class="t " style="left:91px;top:293px;font-size:12px;line-height:16px;color:#fff;letter-spacing:0.053px;font-weight:bold;">3D View: 3D</span>
<span class="t " style="left:39px;top:313px;font-size:12px;line-height:16px;color:#fff;transform:scaleX(0.8912);transform-origin:0 50%;">DESIGN</span>
<span class="t " style="left:55px;top:333px;font-size:12px;line-height:16px;color:#fff;transform:scaleX(0.9048);transform-origin:0 50%;">02_GA_Plans</span>
<span class="t " style="left:43px;top:653px;font-size:12px;line-height:16px;color:#fff;transform:scaleX(0.9556);transform-origin:0 50%;">Legends</span>
<span class="t " style="left:43px;top:673px;font-size:12px;line-height:16px;color:#fff;letter-spacing:-0.109px;">Schedules/Quantities (all)</span>
<span class="t " style="left:43px;top:693px;font-size:12px;line-height:16px;color:#fff;transform:scaleX(0.9729);transform-origin:0 50%;">Sheets ("Company Name")</span>
<span class="t " style="left:43px;top:713px;font-size:12px;line-height:16px;color:#fff;transform:scaleX(0.9402);transform-origin:0 50%;">Families</span>
<span class="t " style="left:43px;top:733px;font-size:12px;line-height:16px;color:#fff;transform:scaleX(0.9657);transform-origin:0 50%;">Groups</span>
<span class="t " style="left:43px;top:753px;font-size:12px;line-height:16px;color:#fff;transform:scaleX(0.9372);transform-origin:0 50%;">Revit Links</span>
<div class="b" style="left:0px;top:973px;width:339px;height:23px;background:#222933;"></div>
<div class="b" style="left:0px;top:974px;width:64px;height:22px;background:#3b4453;"></div>
<div class="b" style="left:66px;top:974px;width:165px;height:22px;background:#3f4859;"></div>
<span class="t " style="left:5px;top:977px;font-size:12px;line-height:16px;color:#c3c8d0;transform:scaleX(0.9691);transform-origin:0 50%;">Properties</span>
<span class="t " style="left:71px;top:977px;font-size:12px;line-height:16px;color:#c3c8d0;letter-spacing:-0.086px;">Project Browser - Step3+4+...</span>
<!-- p_canvas -->
<div class="b" style="left:341px;top:172px;width:1339px;height:21px;background:#465062;"></div>
<div class="b" style="left:342px;top:173px;width:126px;height:20px;background:#4a5466;"></div>
<div class="b" style="left:469px;top:173px;width:128px;height:20px;background:#222933;"></div>
<svg class="b" style="left:346px;top:176px;" width="16" height="16" viewBox="0 0 16 16"><path d="M1 2h6v3h3v-2h4v11h-13z" fill="#6e7888"/><path d="M5 6v8M9 8v6" stroke="#4a5466" stroke-width="1"/></svg>
<span class="t " style="left:369px;top:176px;font-size:12px;line-height:16px;color:#aeb6c2;transform:scaleX(0.8738);transform-origin:0 50%;">LEVEL 7</span>
<svg class="b" style="left:473px;top:175px;" width="18" height="17" viewBox="0 0 18 17"><path d="M1 9l8-8l8 8l-1 1l-7-6l-7 6z" fill="#9aa2ae"/><path d="M3 9l6-5l6 5v7h-12z" fill="#fff"/><rect x="7" y="11" width="3" height="5" fill="#e8b830"/></svg>
<span class="t " style="left:497px;top:176px;font-size:12px;line-height:16px;color:#aeb6c2;letter-spacing:0.660px;font-weight:bold;">3D</span>
<svg class="b" style="left:580px;top:177px;" width="14" height="14" viewBox="0 0 14 14"><path d="M2 2l10 10M12 2l-10 10" stroke="#e8eaee" stroke-width="2"/></svg>
<svg class="b" style="left:1664px;top:178px;" width="14" height="12" viewBox="0 0 14 12"><rect x="1" y="2" width="10" height="1.500" fill="#aeb6c2"/><path d="M1 5h10l-5 5z" fill="#aeb6c2"/></svg>
<div class="b" style="left:341px;top:193px;width:1339px;height:782px;background:#222933;"></div>
<div class="b" style="left:1663px;top:195px;width:17px;height:780px;background:#343b49;"></div>
<svg class="b" style="left:1665px;top:196px;" width="15" height="16" viewBox="0 0 15 16"><path d="M3.500 9.500l4-4l4 4" stroke="#aeb6c2" stroke-width="1.600" fill="none"/></svg>
<div class="b" style="left:1663px;top:211px;width:17px;height:1px;background:#465062;"></div>
<svg class="b" style="left:1665px;top:960px;" width="15" height="14" viewBox="0 0 15 14"><path d="M3.500 4.500l4 4l4-4" stroke="#aeb6c2" stroke-width="1.600" fill="none"/></svg>
<div class="b" style="left:1669px;top:578px;width:3px;height:18px;background:#6e7888;border-radius:2px;"></div>
<div class="b" style="left:341px;top:975px;width:1339px;height:21px;background:#333a48;"></div>
<div class="b" style="left:343px;top:977px;width:443px;height:18px;background:#353e4c;"></div>
<span class="t " style="left:368px;top:978.5px;font-size:11px;line-height:15px;color:#e8eaee;letter-spacing:-0.106px;">1 : 100</span>
<svg class="b" style="left:341px;top:975px;" width="500" height="21" viewBox="341 975 500 21"><rect x="426" y="980" width="16" height="11" fill="#d8dbe0"/><rect x="429" y="982" width="4" height="3" fill="#8a919c"/><rect x="436" y="982" width="4" height="3" fill="#8a919c"/><rect x="432.500" y="985.500" width="4" height="3" fill="#8a919c"/><path d="M453.500 983.500h9v8h-9zM453.500 983.500l4-4h9l-4 4M466.500 979.500v8l-4 4" stroke="#e8eaee" stroke-width="1.200" fill="none"/><circle cx="484" cy="984" r="3.500" fill="#f0c040"/><path d="M484 978v-1.500M484 990v1.500M478 984h-1.500M479.500 979.500l-1-1M488.500 979.500l1-1M479.500 988.500l-1 1" stroke="#f0c040" stroke-width="1.200"/><circle cx="491" cy="988" r="3.200" fill="#40d8e0"/><rect x="490" y="991" width="2" height="2" fill="#e8eaee"/><ellipse cx="510" cy="991.500" rx="5.500" ry="1.800" fill="#0a0c10"/><circle cx="510" cy="984" r="5.500" fill="#dfe2e6"/><circle cx="517" cy="988" r="3.200" fill="#40d8e0"/><rect x="516" y="991" width="2" height="2" fill="#e8eaee"/><path d="M531 982h11l-1 7h-9z M542 983l4-2l-1 5z M531 984c-3-1-3 3 0 4" fill="#c8ccd2"/><circle cx="543" cy="988" r="3.200" fill="#40d8e0"/><rect x="542" y="991" width="2" height="2" fill="#e8eaee"/><path d="M561 992v-9h9" stroke="#e8eaee" stroke-width="1.600" fill="none"/><path d="M566 978v3M556 988h3" stroke="#40a0e8" stroke-width="1.600"/><path d="M566 986l5 5M571 986l-5 5" stroke="#f04048" stroke-width="1.800"/><path d="M587 992v-9h9" stroke="#e8eaee" stroke-width="1.600" fill="none"/><path d="M592 978v3M582 988h3" stroke="#40a0e8" stroke-width="1.600"/><circle cx="595" cy="988" r="3.200" fill="#40d8e0"/><rect x="594" y="991" width="2" height="2" fill="#e8eaee"/><path d="M609 986l8-7l8 7" stroke="#9aa2ae" stroke-width="1.600" fill="none"/><path d="M611 986l6-5l6 5v6h-12z" fill="#fff"/><rect x="616" y="987" width="7" height="5" fill="#40d8e0"/><path d="M617.500 987v-1.500a2 2 0 0 1 4 0" stroke="#40d8e0" stroke-width="1.200" fill="none"/><circle cx="638" cy="988" r="2.500" fill="none" stroke="#aeb6c2" stroke-width="1.300"/><circle cx="645" cy="988" r="2.500" fill="none" stroke="#aeb6c2" stroke-width="1.300"/><path d="M640.500 987.500h2M636 986l3-4M647 986l3-3" stroke="#aeb6c2" stroke-width="1.100"/><circle cx="668" cy="984" r="4.200" fill="#40d8e0"/><rect x="666.500" y="988" width="3" height="3.500" fill="#e8eaee"/><rect x="688" y="980" width="9" height="7" fill="#c8ccd2"/><rect x="692" y="984" width="9" height="7" fill="none" stroke="#c8ccd2" stroke-width="1.200" stroke-dasharray="2 1.500"/><path d="M713 991v-9l3-3h9v9M713 982h9v9M722 982l3-3M717.500 979v12" stroke="#aeb6c2" stroke-width="1" fill="none"/><path d="M714 988h8" stroke="#f04048" stroke-width="1.400" stroke-dasharray="1.500 1"/><circle cx="725" cy="988" r="3.200" fill="#40d8e0"/><rect x="724" y="991" width="2" height="2" fill="#e8eaee"/><path d="M740 985l5-2h6v6l-5 2h-6z" fill="#6ab0f0"/><path d="M740 985h6v6M746 985l5-2" stroke="#e8eaee" stroke-width=".8" fill="none"/><path d="M765 978v8M777 978v8M765 980h12" stroke="#e8eaee" stroke-width="1.200" fill="none"/><path d="M765 989h6" stroke="#e8eaee" stroke-width="1" stroke-dasharray="1.500 1"/><circle cx="777" cy="988" r="3.200" fill="#40d8e0"/><rect x="776" y="991" width="2" height="2" fill="#e8eaee"/><path d="M796 981l-3.500 4.500l3.500 4.500" stroke="#6e7888" stroke-width="1.600" fill="none"/></svg>
<div class="b" style="left:789px;top:976px;width:1px;height:19px;background:#222933;"></div>
<div class="b" style="left:802px;top:976px;width:1px;height:19px;background:#3b4453;"></div>
<div class="b" style="left:1215px;top:984px;width:17px;height:3px;background:#6e7888;border-radius:2px;"></div>
<div class="b" style="left:1647px;top:975px;width:1px;height:21px;background:#3b4453;"></div>
<svg class="b" style="left:1648px;top:978px;" width="14" height="14" viewBox="0 0 14 14"><path d="M5 2.500l4 4.500l-4 4.500" stroke="#aeb6c2" stroke-width="1.600" fill="none"/></svg>
<!-- p_build -->
<svg class="b" style="left:341px;top:194px;shape-rendering:crispEdges;" width="713" height="781" viewBox="341 194 713 781"><path d="M551.5 322.5L679.0 247.0L826.5 333.0L826.5 501.0L845.0 668.0L845.0 779.0L551.5 611.5Z" fill="#292f3b"/><path d="M826.5 501.0L873.0 527.0L873.0 760.0L845.0 779.0L845.0 668.0Z" fill="#292f3b"/><path d="M558.0 326.5L679.5 256.0L823.0 336.0L699.0 403.0L674.0 389.0L674.0 371.0L629.0 343.0L629.0 366.0Z" fill="#222933"/><path d="M699.0 572.0L826.5 502.0L873.0 529.0L873.0 646.0L845.0 661.0L686.0 574.0Z" fill="#222933"/><path d="M628.8 342.0L756.5 270.0L802.9 298.8L674.1 370.9Z" fill="#222933"/><path d="M552.0 494.5L629.0 538.5L629.0 545.0L552.0 501.0Z" fill="#fff"/><path d="M552.0 494.5L563.0 488.5L571.0 493.0L560.0 499.0Z" fill="#fff"/><path d="M590.5 548.5L602.0 555.0L602.0 569.0L590.5 562.5Z" fill="#e4e6ea"/><path d="M590.5 573.0L602.0 579.5L602.0 593.5L590.5 587.0Z" fill="#d4d6da"/><path d="M629.0 343.0L674.0 372.0L674.0 580.0L629.0 640.0Z" fill="#2b313d"/><path d="M664.0 371.0L671.0 375.0L671.0 391.5L664.0 387.5Z" fill="#fff"/><circle cx="667.5" cy="379.0" r=".7" fill="#222933"/><circle cx="667.5" cy="384.0" r=".7" fill="#222933"/><path d="M664.0 395.6L671.0 399.6L671.0 416.1L664.0 412.1Z" fill="#fff"/><circle cx="667.5" cy="403.6" r=".7" fill="#222933"/><circle cx="667.5" cy="408.6" r=".7" fill="#222933"/><path d="M664.0 420.0L671.0 424.0L671.0 440.5L664.0 436.5Z" fill="#fff"/><circle cx="667.5" cy="428.0" r=".7" fill="#222933"/><circle cx="667.5" cy="433.0" r=".7" fill="#222933"/><path d="M664.0 444.5L671.0 448.5L671.0 465.0L664.0 461.0Z" fill="#fff"/><circle cx="667.5" cy="452.5" r=".7" fill="#222933"/><circle cx="667.5" cy="457.5" r=".7" fill="#222933"/><path d="M664.0 468.0L671.0 472.0L671.0 488.5L664.0 484.5Z" fill="#fff"/><circle cx="667.5" cy="476.0" r=".7" fill="#222933"/><circle cx="667.5" cy="481.0" r=".7" fill="#222933"/><path d="M664.0 493.0L671.0 497.0L671.0 513.5L664.0 509.5Z" fill="#fff"/><circle cx="667.5" cy="501.0" r=".7" fill="#222933"/><circle cx="667.5" cy="506.0" r=".7" fill="#222933"/><path d="M664.0 517.7L671.0 521.7L671.0 538.2L664.0 534.2Z" fill="#fff"/><circle cx="667.5" cy="525.7" r=".7" fill="#222933"/><circle cx="667.5" cy="530.7" r=".7" fill="#222933"/><path d="M664.0 542.4L671.0 546.4L671.0 562.9L664.0 558.9Z" fill="#fff"/><circle cx="667.5" cy="550.4" r=".7" fill="#222933"/><circle cx="667.5" cy="555.4" r=".7" fill="#222933"/><path d="M664.0 590.8L671.0 594.8L671.0 611.3L664.0 607.3Z" fill="#fff"/><circle cx="667.5" cy="598.8" r=".7" fill="#222933"/><circle cx="667.5" cy="603.8" r=".7" fill="#222933"/><path d="M664.0 615.5L671.0 619.5L671.0 636.0L664.0 632.0Z" fill="#fff"/><circle cx="667.5" cy="623.5" r=".7" fill="#222933"/><circle cx="667.5" cy="628.5" r=".7" fill="#222933"/><path d="M751.5 411.1L759.0 407.3L759.0 429.3L751.5 433.1Z" fill="#fff"/><path d="M751.5 435.5L759.0 431.7L759.0 453.7L751.5 457.5Z" fill="#fff"/><path d="M751.5 459.9L759.0 456.1L759.0 478.1L751.5 481.9Z" fill="#fff"/><path d="M751.5 484.3L759.0 480.5L759.0 502.5L751.5 506.3Z" fill="#fff"/><path d="M751.5 508.7L759.0 504.9L759.0 526.9L751.5 530.7Z" fill="#fff"/><path d="M699.0 557.0L826.5 486.0L826.5 490.0L699.0 561.0Z" fill="#fff"/><path d="M673.0 567.5L845.0 659.0L873.0 643.5L873.0 652.0L845.0 668.5L673.0 575.5Z" fill="#fff"/><path d="M807.5 498.0L873.0 530.0L873.0 537.0L807.5 505.0Z" fill="#fff"/><path d="M846.0 718.0L873.0 702.5L873.0 737.5L846.0 753.0Z" fill="#fff"/><path d="M845.0 779.0L873.0 763.0L873.0 800.0L845.0 800.0Z" fill="#222933"/><path d="M351.0 653.1L578.1 645.8M385.0 672.5L611.7 665.3M419.0 692.0L645.4 684.7M453.0 711.4L667.3 704.6L846.0 803.5L875.0 787.1M487.0 730.9L682.8 724.6L846.0 815.0L875.0 798.6M521.0 750.3L698.2 744.6L846.0 826.5L875.0 810.1M555.0 769.8L713.6 764.7L843.9 838.3M589.0 789.2L729.1 784.7L833.9 844.0M623.0 808.7L744.5 804.8L823.8 849.6M657.0 828.1L759.9 824.8L813.8 855.3M691.0 847.6L775.3 844.9L803.8 860.9M725.0 867.0L797.2 864.7M759.0 886.5L875.0 869.1M793.0 905.9L875.0 893.6M827.0 925.3L875.0 918.1M343.0 648.5L852.3 945.4L873.0 933.5M494.5 634.0L798.0 809.0M551.0 597.0L537.0 605.0L534.0 609.0L538.0 613.5L600.4 657.7M846.0 803.0L875.0 786.5M690.0 723.0L742.0 753.0M718.5 867.0L797.0 819.5L802.0 816.0L803.0 812.0L798.0 809.0L742.0 780.0M755.8 888.6L836.0 841.2L875.0 819.0M844.4 838.0L875.0 854.5M838.2 841.5L850.9 840.9M828.6 846.9L860.9 845.3M819.1 852.3L870.9 849.7M809.5 857.7L875.0 854.4M800.0 863.1L875.0 859.3M790.4 868.5L875.0 864.3M780.9 873.9L875.0 869.2M771.3 879.3L875.0 874.1M343.0 581.0L550.0 461.6M373.0 563.6L550.0 497.7M405.0 584.0L550.0 526.5M343.0 623.3L353.4 623.3L363.7 598.6L405.0 584.0M373.0 563.6L451.0 609.0L451.0 612.0L398.0 640.0M411.0 542.0L478.0 582.0L487.0 586.0L497.0 586.0L517.0 575.0L550.0 560.0M343.0 640.0L486.0 636.0L494.0 634.0M492.5 637.0L367.5 662.0M492.5 637.0L403.0 684.0M520.0 600.0L550.0 585.0M520.0 600.0L524.0 606.0L551.0 622.0M723.6 346.0L723.6 369.0M674.0 391.5L723.6 369.0M678.0 375.0L678.0 395.0M797.7 297.0L797.7 313.0M800.0 298.0L800.0 314.0M629.0 344.5L674.0 373.5L803.0 301.0M579.0 349.3L579.0 364.3M591.0 380.4L591.0 395.4M602.0 411.1L602.0 426.1M602.0 435.4L602.0 450.4M579.0 446.9L579.0 461.9M579.0 471.3L579.0 486.3M579.0 476.0L592.0 470.0L607.0 478.0L594.0 485.0ZM553.0 480.0L565.0 487.0L553.0 494.0ZM558.0 510.0L569.0 516.2L569.0 529.2L558.0 523.0ZM555.0 507.0L564.0 502.0L575.0 508.0L566.0 513.0ZM580.0 524.0L591.0 530.2L591.0 543.2L580.0 537.0ZM577.0 521.0L586.0 516.0L597.0 522.0L588.0 527.0ZM577.4 603.0L577.4 624.7M577.4 603.0L616.5 624.7L616.5 645.3M577.4 624.7L596.0 614.0M577.4 624.7L616.5 646.5M675.5 372.0L675.5 571.0M684.5 408.3L684.5 424.3M684.5 432.8L684.5 448.8M684.5 457.3L684.5 473.3M684.5 481.8L684.5 497.8M684.5 506.3L684.5 522.3M684.5 530.8L684.5 546.8M824.0 340.0L824.0 488.0M814.0 360.8L814.0 374.8M807.0 363.9L821.0 356.8L828.0 359.3L814.0 366.4ZM729.0 428.6L729.0 442.6M722.0 431.7L736.0 424.5L743.0 427.0L729.0 434.2ZM777.5 403.9L777.5 417.9M770.5 406.9L784.5 399.8L791.5 402.3L777.5 409.4ZM814.0 385.2L814.0 399.2M807.0 388.3L821.0 381.2L828.0 383.7L814.0 390.8ZM729.0 453.0L729.0 467.0M722.0 456.1L736.0 448.9L743.0 451.4L729.0 458.6ZM777.5 428.3L777.5 442.3M770.5 431.3L784.5 424.2L791.5 426.7L777.5 433.8ZM814.0 409.6L814.0 423.6M807.0 412.7L821.0 405.6L828.0 408.1L814.0 415.2ZM729.0 477.4L729.0 491.4M722.0 480.5L736.0 473.3L743.0 475.8L729.0 483.0ZM777.5 452.7L777.5 466.7M770.5 455.7L784.5 448.6L791.5 451.1L777.5 458.2ZM814.0 434.1L814.0 448.1M807.0 437.1L821.0 430.0L828.0 432.5L814.0 439.6ZM729.0 501.8L729.0 515.8M722.0 504.9L736.0 497.7L743.0 500.2L729.0 507.4ZM777.5 477.1L777.5 491.1M770.5 480.1L784.5 473.0L791.5 475.5L777.5 482.6ZM814.0 458.4L814.0 472.4M807.0 461.5L821.0 454.4L828.0 456.9L814.0 464.0ZM729.0 526.2L729.0 540.2M722.0 529.3L736.0 522.1L743.0 524.6L729.0 531.8ZM777.5 501.5L777.5 515.5M770.5 504.5L784.5 497.4L791.5 499.9L777.5 507.0ZM814.0 482.8L814.0 496.8M807.0 485.9L821.0 478.8L828.0 481.3L814.0 488.4ZM701.0 572.0L807.0 512.0M763.0 528.0L807.0 503.0M699.0 575.0L674.0 561.0M680.0 545.0L680.0 565.0M690.0 551.0L690.0 571.0M812.0 511.0L873.0 544.0M716.0 561.0L818.0 628.0M718.0 564.0L818.0 631.0M724.0 578.0L748.0 565.0L775.0 582.0M851.0 641.0L858.0 641.0L861.0 645.0M820.0 640.0L873.0 612.0M840.0 605.0L873.0 623.0M685.0 603.4L685.0 621.4M707.0 616.8L707.0 634.8M785.2 661.5L785.2 678.5M811.0 676.0L811.0 693.0M832.2 687.8L832.2 704.8M734.0 643.0L734.0 657.0M741.0 647.0L741.0 661.0M748.0 646.0L748.0 665.0M755.0 642.0L755.0 662.0M667.0 662.0L676.0 657.0L716.0 680.0L716.0 696.0L710.0 699.0M667.0 662.0L707.0 685.0L716.0 680.0M722.0 688.0L735.0 696.0M756.5 706.0L795.6 728.0M756.5 732.0L795.6 754.0M740.0 696.0L740.0 716.0M463.6 528.5 a28.8 34.5 0 1 0 57.6 0 a28.8 34.5 0 1 0 -57.6 0M464.4 591.4 a29.0 43.0 0 1 0 58.0 0 a29.0 43.0 0 1 0 -58.0 0M491.0 558.4L494.0 558.4L494.0 575.0L491.0 575.0ZM492.0 630.5L495.0 630.5L495.0 647.0L492.0 647.0ZM560.9 662.0 a19.6 19.6 0 1 0 39.2 0 a19.6 19.6 0 1 0 -39.2 0M646.9 705.6 a29.3 35.5 0 1 0 58.6 0 a29.3 35.5 0 1 0 -58.6 0M714.2 736.5 a28.8 42.7 0 1 0 57.6 0 a28.8 42.7 0 1 0 -57.6 0M827 462 C850 462 858 490 856 512M873 482 C850 484 842 510 846 535M827 478 C845 474 860 478 873 486M827 492 C845 490 860 494 873 500M827 462 C840 470 860 482 873 490M552 455 C547 470 546 485 552 500" stroke="#fff" stroke-width="1" fill="none"/><path d="M628.8 342.0L756.5 270.0L802.9 298.8L674.1 370.9ZM552.0 322.5L552.0 611.5M573.0 345.9L585.0 352.6L585.0 367.6L573.0 360.9ZM617.0 371.7L628.0 377.9L628.0 392.9L617.0 386.7ZM585.0 377.0L597.0 383.8L597.0 398.8L585.0 392.0ZM617.0 396.1L628.0 402.3L628.0 417.3L617.0 411.1ZM596.0 407.7L608.0 414.4L608.0 429.4L596.0 422.7ZM617.0 420.5L628.0 426.7L628.0 441.7L617.0 435.5ZM596.0 432.1L608.0 438.8L608.0 453.8L596.0 447.1ZM617.0 444.9L628.0 451.1L628.0 466.1L617.0 459.9ZM573.0 443.5L585.0 450.2L585.0 465.2L573.0 458.5ZM617.0 469.3L628.0 475.5L628.0 490.5L617.0 484.3ZM573.0 467.9L585.0 474.6L585.0 489.6L573.0 482.9ZM617.0 493.7L628.0 499.9L628.0 514.9L617.0 508.7ZM574.0 500.4L585.0 506.6L585.0 520.6L574.0 514.4ZM589.0 508.9L600.0 515.1L600.0 529.1L589.0 522.9ZM600.0 515.1L607.0 519.1L607.0 533.1L600.0 529.1ZM609.0 520.2L616.0 524.2L616.0 538.2L609.0 534.2ZM617.0 524.7L624.0 528.7L624.0 542.7L617.0 538.7ZM622.0 527.5L629.0 531.5L629.0 545.5L622.0 541.5ZM616.5 564.0L628.5 570.8L628.5 584.8L616.5 578.0ZM616.5 588.7L628.5 595.5L628.5 609.5L616.5 602.7ZM551.6 611.4L577.4 625.0M629.0 342.0L629.0 545.0M673.5 371.0L673.5 571.0M699.0 407.0L699.0 571.0M678.0 404.7L691.0 412.0L691.0 428.0L678.0 420.7ZM678.0 429.2L691.0 436.5L691.0 452.5L678.0 445.2ZM678.0 453.7L691.0 461.0L691.0 477.0L678.0 469.7ZM678.0 478.2L691.0 485.5L691.0 501.5L678.0 494.2ZM678.0 502.7L691.0 510.0L691.0 526.0L678.0 518.7ZM678.0 527.2L691.0 534.5L691.0 550.5L678.0 543.2ZM826.5 334.0L826.5 501.0M808.0 363.9L820.0 357.8L820.0 371.8L808.0 377.9ZM723.0 431.7L735.0 425.5L735.0 439.5L723.0 445.7ZM771.5 406.9L783.5 400.8L783.5 414.8L771.5 420.9ZM808.0 388.3L820.0 382.2L820.0 396.2L808.0 402.3ZM723.0 456.1L735.0 449.9L735.0 463.9L723.0 470.1ZM771.5 431.3L783.5 425.2L783.5 439.2L771.5 445.3ZM808.0 412.7L820.0 406.6L820.0 420.6L808.0 426.7ZM723.0 480.5L735.0 474.3L735.0 488.3L723.0 494.5ZM771.5 455.7L783.5 449.6L783.5 463.6L771.5 469.7ZM808.0 437.1L820.0 431.0L820.0 445.0L808.0 451.1ZM723.0 504.9L735.0 498.7L735.0 512.7L723.0 518.9ZM771.5 480.1L783.5 474.0L783.5 488.0L771.5 494.1ZM808.0 461.5L820.0 455.4L820.0 469.4L808.0 475.5ZM723.0 529.3L735.0 523.1L735.0 537.1L723.0 543.3ZM771.5 504.5L783.5 498.4L783.5 512.4L771.5 518.5ZM808.0 485.9L820.0 479.8L820.0 493.8L808.0 499.9ZM763.0 528.0L763.0 537.0M770.0 524.0L770.0 533.0M777.0 520.1L777.0 529.1M784.0 516.1L784.0 525.1M791.0 512.1L791.0 521.1M798.0 508.2L798.0 517.2M805.0 504.2L805.0 513.2M845.0 668.0L845.0 779.0M679.0 600.0L691.5 607.1L691.5 625.1L679.0 618.0ZM679.0 634.5L691.5 641.6L691.5 659.6L679.0 652.5ZM701.0 613.4L713.5 620.5L713.5 638.5L701.0 631.4ZM701.0 647.9L713.5 655.0L713.5 673.0L701.0 665.9ZM779.0 658.0L791.5 665.1L791.5 682.1L779.0 675.0ZM805.0 672.6L817.0 679.4L817.0 696.4L805.0 689.6ZM825.5 684.0L839.0 691.6L839.0 708.6L825.5 701.0ZM779.0 683.0L791.5 690.1L791.5 707.1L779.0 700.0ZM727.0 634.0L734.0 630.0L755.0 642.0L748.0 646.0ZM721.5 650.0L734.0 643.0L734.0 631.0M721.5 650.0L749.0 666.0L758.5 660.5L758.5 648.0M721.5 650.0L721.5 658.0L749.0 674.0L749.0 666.0M749.0 674.0L758.5 668.5L758.5 660.0M676.0 668.0L676.0 690.0M683.0 672.0L683.0 694.0M690.0 675.9L690.0 697.9M697.0 679.9L697.0 701.9M704.0 683.8L704.0 705.8M710.0 690.0L710.0 705.0M717.0 686.0L717.0 712.0M722.0 688.0L722.0 715.0M756.5 706.0L756.5 732.0M764.0 710.2L764.0 736.2M772.0 714.8L772.0 740.8M780.0 719.3L780.0 745.3M788.0 723.8L788.0 749.8M795.6 728.1L795.6 754.1M616.5 646.0L845.0 779.0M848.0 754.9L854.0 751.5L854.0 768.5L848.0 771.9ZM856.0 750.4L862.0 747.0L862.0 764.0L856.0 767.4ZM864.0 745.8L870.0 742.4L870.0 759.4L864.0 762.8ZM845.0 779.0L873.0 763.0" stroke="#fff" stroke-width="1.5" fill="none"/><path d="M847.0 647.0L862.0 647.0M850.0 643.0L850.0 660.0M858.0 643.0L858.0 660.0M846.0 655.0L864.0 655.0M853.0 650.0L856.0 661.0M580.5 680.0L580.5 696.0M676.2 736.0L676.2 752.0M743.0 775.0L743.0 792.0" stroke="#fff" stroke-width="2" fill="none"/><path d="M786.0 315.0L826.0 334.5M675.0 370.6L785.0 314.5" stroke="#fff" stroke-width="6.5" fill="none"/><path d="M552.0 352.4L629.0 395.9M552.0 376.8L629.0 420.3M552.0 401.2L629.0 444.7M552.0 425.6L629.0 469.1M552.0 450.0L629.0 493.5M552.0 474.4L629.0 517.9M674.0 422.7L699.0 436.8M674.0 447.2L699.0 461.3M674.0 471.7L699.0 485.8M674.0 496.2L699.0 510.3M674.0 520.7L699.0 534.8M674.0 545.2L699.0 559.3M699.0 436.9L826.5 371.9M699.0 461.3L826.5 396.3M699.0 485.7L826.5 420.7M699.0 510.1L826.5 445.1M699.0 534.5L826.5 469.5M717.0 563.0L717.0 586.0M765.5 598.0L765.5 614.0M818.0 629.0L818.0 652.0" stroke="#fff" stroke-width="2.5" fill="none"/><path d="M818.0 628.5L873.0 597.5" stroke="#fff" stroke-width="4" fill="none"/><path d="M554.0 326.5L679.5 251.8L738.0 284.8M552.0 326.5L629.0 369.0" stroke="#fff" stroke-width="7" fill="none"/><path d="M674.0 394.5L698.5 407.6L826.5 342.6" stroke="#fff" stroke-width="8.5" fill="none"/><path d="M368.0 662.8L594.9 655.5M402.0 682.2L628.5 675.0M436.0 701.7L662.2 694.5M470.0 721.1L675.0 714.6L846.0 809.2L875.0 792.9M504.0 740.6L690.5 734.6L846.0 820.7L875.0 804.4M538.0 760.0L705.9 754.7L846.0 832.2L875.0 815.9M572.0 779.5L721.3 774.7L838.9 841.1M606.0 798.9L736.8 794.8L828.9 846.8M640.0 818.4L752.2 814.8L818.8 852.4M674.0 837.8L767.6 834.8L808.8 858.1M708.0 857.3L816.4 853.8M742.0 876.7L777.9 875.6M776.0 896.2L875.0 881.3M810.0 915.6L875.0 905.9M844.0 935.1L875.0 930.4M833.4 844.2L855.9 843.1M823.9 849.6L865.9 847.5M814.3 855.0L875.0 852.0M804.8 860.4L875.0 856.9M795.2 865.8L875.0 861.8M785.6 871.2L875.0 866.7M776.1 876.6L875.0 871.7M766.5 882.0L875.0 876.6M343.0 592.4L550.0 479.0M390.0 585.0L550.0 512.0M343.0 634.0L422.0 631.0L442.0 585.0L550.0 545.0M494.0 634.0L520.0 570.0M827.0 515.0L873.0 507.0" stroke="#8d9097" stroke-width="1" fill="none"/><path d="M575.0 348.9L583.0 353.4L583.0 363.4L575.0 358.9ZM587.0 380.0L595.0 384.6L595.0 394.6L587.0 390.0ZM598.0 410.7L606.0 415.2L606.0 425.2L598.0 420.7ZM598.0 435.1L606.0 439.6L606.0 449.6L598.0 445.1ZM575.0 446.5L583.0 451.0L583.0 461.0L575.0 456.5ZM575.0 470.9L583.0 475.4L583.0 485.4L575.0 480.9ZM680.0 406.7L689.0 411.8L689.0 421.8L680.0 416.7ZM680.0 431.2L689.0 436.3L689.0 446.3L680.0 441.2ZM680.0 455.7L689.0 460.8L689.0 470.8L680.0 465.7ZM680.0 480.2L689.0 485.3L689.0 495.3L680.0 490.2ZM680.0 504.7L689.0 509.8L689.0 519.8L680.0 514.7ZM680.0 529.2L689.0 534.3L689.0 544.3L680.0 539.2ZM810.0 366.9L818.0 362.8L818.0 371.8L810.0 375.9ZM725.0 434.7L733.0 430.6L733.0 439.6L725.0 443.7ZM773.5 409.9L781.5 405.8L781.5 414.8L773.5 418.9ZM810.0 391.3L818.0 387.2L818.0 396.2L810.0 400.3ZM725.0 459.1L733.0 455.0L733.0 464.0L725.0 468.1ZM773.5 434.3L781.5 430.2L781.5 439.2L773.5 443.3ZM810.0 415.7L818.0 411.6L818.0 420.6L810.0 424.7ZM725.0 483.5L733.0 479.4L733.0 488.4L725.0 492.5ZM773.5 458.7L781.5 454.6L781.5 463.6L773.5 467.7ZM810.0 440.1L818.0 436.0L818.0 445.0L810.0 449.1ZM725.0 507.9L733.0 503.8L733.0 512.8L725.0 516.9ZM773.5 483.1L781.5 479.0L781.5 488.0L773.5 492.1ZM810.0 464.5L818.0 460.4L818.0 469.4L810.0 473.5ZM725.0 532.3L733.0 528.2L733.0 537.2L725.0 541.3ZM773.5 507.5L781.5 503.4L781.5 512.4L773.5 516.5ZM810.0 488.9L818.0 484.8L818.0 493.8L810.0 497.9ZM680.5 603.0L684.5 605.3L684.5 617.3L680.5 615.0ZM680.0 648.5L691.0 654.7L691.0 658.2L680.0 652.0ZM702.5 616.4L706.5 618.7L706.5 630.7L702.5 628.4ZM702.0 661.9L713.0 668.1L713.0 671.6L702.0 665.4ZM780.5 661.0L790.0 666.4L790.0 676.4L780.5 671.0ZM806.5 675.6L815.5 680.7L815.5 690.7L806.5 685.6ZM827.0 687.0L837.5 692.9L837.5 702.9L827.0 697.0ZM734.0 662.0L752.0 672.5L752.0 676.0L734.0 666.0ZM730.0 716.0L736.0 712.0L741.0 718.0L746.0 716.0L749.0 723.0L756.0 722.0L757.0 730.0L751.0 735.0L745.0 731.0L741.0 736.0L736.0 729.0L731.0 727.0Z" fill="#c8cacf" opacity=".75"/><path d="M553.0 601.0L542.0 607.5L544.0 611.0L600.0 652.0M534.0 605.0L540.0 602.0L556.0 611.0M641.0 340.0L660.0 352.0L702.0 328.0M660.0 329.0L677.0 339.0L690.0 332.0M680.0 314.0L722.0 339.0M650.0 350.0L700.0 322.0M581.0 622.0L597.0 613.0M722.0 573.0L740.0 563.0M742.0 598.0L760.0 588.0M778.0 618.0L792.0 610.0M760.4 554.0L790.2 540.0L846.0 577.0L817.0 592.6ZM811.4 537.0L817.0 535.3L851.4 558.9L846.7 562.0ZM814.0 537.5L849.0 561.0" stroke="#fff" stroke-width="1.2" stroke-dasharray="1.2 1.8" fill="none"/><path d="M600.4 658.7L844.0 799.7L875.0 782.0" stroke="#fff" stroke-width="2.4" fill="none"/><path d="M600.4 658.7L844.0 799.7L875.0 782.0" stroke="#7d8088" stroke-width="2.4" stroke-dasharray="1.5 2.5" fill="none"/><path d="M560.0 622.0L840.0 783.0M575.0 640.0L842.0 791.0" stroke="#d8dade" stroke-width="1.2" stroke-dasharray="1.2 9.5" fill="none"/></svg>
<!-- p_dlg1 -->
<div class="b" style="left:1054px;top:221px;width:420px;height:262px;background:#f0f0f0;box-shadow:0 0 14px rgba(0,0,0,.45);"></div>
<div class="b" style="left:1054px;top:221px;width:420px;height:30px;background:#fff;"></div>
<span class="t " style="left:1062px;top:228px;font-size:12px;line-height:16px;color:#8c8c8c;transform:scaleX(0.9449);transform-origin:0 50%;">Edit Shared Parameters</span>
<svg class="b" style="left:1453px;top:229px;" width="13" height="13" viewBox="0 0 13 13"><path d="M1.500 1.500l10 10M11.500 1.500l-10 10" stroke="#555" stroke-width="1"/></svg>
<span class="t " style="left:1064px;top:263.5px;font-size:11px;line-height:15px;color:#000;letter-spacing:-0.040px;">Shared parameter file:</span>
<div class="b" style="left:1065px;top:284px;width:207px;height:20px;background:#f0f0f0;border:1px solid #7a7a7a;overflow:hidden;"></div>
<span class="t " style="left:1070px;top:286.5px;font-size:11px;line-height:15px;color:#000;letter-spacing:-0.111px;clip-path:inset(0 4px 0 0);">C:\Users\DipeshThapa\Desktop\Trial Pack</span>
<div class="b" style="left:1279px;top:284px;width:88px;height:21px;background:#e1e1e1;border:1px solid #adadad;"></div>
<span class="t " style="left:1298px;top:286.5px;font-size:11px;line-height:15px;color:#000;letter-spacing:0.144px;">Browse...</span>
<div class="b" style="left:1375px;top:284px;width:88px;height:21px;background:#e1e1e1;border:1px solid #adadad;"></div>
<span class="t " style="left:1395px;top:286.5px;font-size:11px;line-height:15px;color:#000;letter-spacing:0.352px;">Create...</span>
<span class="t " style="left:1064px;top:317.5px;font-size:11px;line-height:15px;color:#000;letter-spacing:-0.040px;">Parameter group:</span>
<div class="b" style="left:1065px;top:336px;width:263px;height:21px;background:#cccccc;border:1px solid #bfbfbf;"></div>
<svg class="b" style="left:1313px;top:343px;" width="11" height="8" viewBox="0 0 11 8"><path d="M1.500 1.500l4 4l4-4" stroke="#9a9a9a" stroke-width="1" fill="none"/></svg>
<span class="t " style="left:1064px;top:365.5px;font-size:11px;line-height:15px;color:#000;letter-spacing:-0.091px;">Parameters:</span>
<div class="b" style="left:1065px;top:383px;width:263px;height:100px;background:#fff;border:1px solid #6a7080;border-bottom:none;"></div>
<div class="b" style="left:1338px;top:383px;width:126px;height:100px;border:1px solid #dcdcdc;border-bottom:none;"></div>
<div class="b" style="left:1344px;top:378px;width:60px;height:10px;background:#f0f0f0;"></div>
<span class="t " style="left:1346px;top:375.5px;font-size:11px;line-height:15px;color:#000;transform:scaleX(0.9674);transform-origin:0 50%;">Parameters</span>
<div class="b" style="left:1349px;top:393px;width:103px;height:22px;background:#cccccc;border:1px solid #bfbfbf;"></div>
<span class="t " style="left:1383px;top:396.5px;font-size:11px;line-height:15px;color:#838383;letter-spacing:0.487px;">New...</span>
<div class="b" style="left:1349px;top:423px;width:103px;height:22px;background:#cccccc;border:1px solid #bfbfbf;"></div>
<span class="t " style="left:1369px;top:426.5px;font-size:11px;line-height:15px;color:#838383;letter-spacing:0.141px;">Properties...</span>
<div class="b" style="left:1349px;top:454px;width:103px;height:22px;background:#cccccc;border:1px solid #bfbfbf;"></div>
<span class="t " style="left:1380px;top:457.5px;font-size:11px;line-height:15px;color:#838383;letter-spacing:0.322px;">Move...</span>
<div class="b" style="left:1278px;top:283px;width:90px;height:22px;border:2px solid #f8444a;box-shadow:0 2px 4px rgba(0,0,0,.4),inset 0 1px 4px rgba(0,0,0,.4);"></div>
<div class="b" style="left:1302px;top:233px;width:40px;height:40px;border-radius:50%;background:#fa4246;box-shadow:0 2px 5px rgba(0,0,0,.45);"></div><span class="t " style="left:1313.5px;top:236.5px;font-size:30px;line-height:34px;color:#fff;letter-spacing:0.314px;font-family:'Liberation Sans',sans-serif;">3</span>
<!-- p_dlg2 -->
<div class="b" style="left:873px;top:479px;width:774px;height:485px;background:#f0f0f0;box-shadow:0 0 16px rgba(0,0,0,.5);"></div>
<div class="b" style="left:873px;top:479px;width:774px;height:30px;background:#fff;"></div>
<svg class="b" style="left:882px;top:485px;" width="15" height="17" viewBox="0 0 15 17"><rect x="0" y="2" width="4" height="12" fill="#0d4fa3"/><rect x="1" y="0" width="13" height="16" rx="1.500" fill="#1a66d0"/><rect x="1" y="12" width="13" height="4" fill="#0b3f93"/></svg>
<span class="t " style="left:886px;top:485px;font-size:8px;line-height:12px;color:#fff;font-weight:bold;">R</span>
<span class="t " style="left:902px;top:486px;font-size:12px;line-height:16px;color:#8c8c8c;transform:scaleX(0.9537);transform-origin:0 50%;">Browse for Shared Parameter File</span>
<span class="t " style="left:1576px;top:485px;font-size:12px;line-height:16px;color:#8c8c8c;">?</span>
<svg class="b" style="left:1617px;top:486px;" width="14" height="14" viewBox="0 0 14 14"><path d="M2 2l10 10M12 2l-10 10" stroke="#555" stroke-width="1"/></svg>
<span class="t " style="left:952px;top:524.5px;font-size:11px;line-height:15px;color:#000;transform:scaleX(0.9604);transform-origin:0 50%;">Look in:</span>
<div class="b" style="left:998px;top:520px;width:474px;height:22px;background:#e1e1e1;border:1px solid #adadad;"></div>
<svg class="b" style="left:1004px;top:522px;" width="15" height="18" viewBox="0 0 15 18"><path d="M1 1h11v15h-11z" fill="#fbe28a"/><path d="M12 3h2v13h-2z" fill="#f0c850"/></svg>
<span class="t " style="left:1020px;top:522.5px;font-size:11px;line-height:15px;color:#000;transform:scaleX(0.9434);transform-origin:0 50%;">Unpacked Trial Files</span>
<svg class="b" style="left:1457px;top:527px;" width="12" height="8" viewBox="0 0 12 8"><path d="M1.500 1.500l4.500 4.500l4.500-4.500" stroke="#444" stroke-width="1.100" fill="none"/></svg>
<svg class="b" style="left:1476px;top:518px;" width="170" height="24" viewBox="1476 518 170 24"><path d="M1480 530l8-7v4.500h8v5h-8v4.500z" fill="#1e88e5"/><path d="M1505 523h6l1.500 2h5v9h-12.500z" fill="#f5a623"/><path d="M1516 531l4 5h-2.500v2h-3v-2h-2.500z" fill="#1e88e5"/><path d="M1533 524l12 12M1545 524l-12 12" stroke="#ee3030" stroke-width="2.600"/><path d="M1556 522h6l1.500 2h5v9h-12.500z" fill="#f5a623"/><path d="M1569 532v6M1566 535h6" stroke="#20a040" stroke-width="1.800"/><path d="M1625 528h8l-4 4.500z" fill="#000"/></svg>
<span class="t " style="left:1587px;top:522.5px;font-size:11px;line-height:15px;color:#000;transform:scaleX(0.8922);transform-origin:0 50%;">Views</span>
<div class="b" style="left:1587px;top:536px;width:7px;height:1px;background:#000;"></div>
<div class="b" style="left:884px;top:545px;width:107px;height:377px;background:#a0a0a0;border:1px solid #696969;box-shadow:inset 1px 1px 0 #e8e8e8, 1px 1px 0 #fff;"></div>
<span class="t " style="left:918px;top:590.5px;font-size:11px;line-height:15px;color:#000;letter-spacing:0.129px;">History</span>
<span class="t " style="left:909px;top:652.5px;font-size:11px;line-height:15px;color:#000;transform:scaleX(0.9707);transform-origin:0 50%;">Documents</span>
<span class="t " style="left:903px;top:714.5px;font-size:11px;line-height:15px;color:#000;transform:scaleX(0.9694);transform-origin:0 50%;">My Computer</span>
<span class="t " style="left:895px;top:776.5px;font-size:11px;line-height:15px;color:#000;letter-spacing:-0.005px;">My Network Pl...</span>
<span class="t " style="left:913px;top:838.5px;font-size:11px;line-height:15px;color:#000;letter-spacing:-0.029px;">Favorites</span>
<span class="t " style="left:916px;top:900.5px;font-size:11px;line-height:15px;color:#000;transform:scaleX(0.9665);transform-origin:0 50%;">Desktop</span>
<svg class="b" style="left:884px;top:545px;" width="107" height="377" viewBox="884 545 107 377"><rect x="937.600" y="560.700" width="12.400" height="17" fill="#f6f6f6" stroke="#b0b0b0" stroke-width=".6"/><path d="M940 565h8M940 567.500h8M940 570h8M940 572.500h8" stroke="#8aa4c0" stroke-width=".8"/><rect x="944" y="566" width="4" height="3" fill="#4a78a8"/><circle cx="930.600" cy="560" r="7.800" fill="#dedede" stroke="#8e8e8e" stroke-width="1.200"/><circle cx="930.600" cy="560" r="6" fill="#f2f2f2"/><path d="M930.600 555.500v4.500l4 1.500" stroke="#333" stroke-width="1" fill="none"/><rect x="926.600" y="567.800" width="16.400" height="12.700" fill="#fff"/><rect x="927.800" y="569" width="14" height="10.300" fill="#6aa8d8"/><path d="M927.800 576c3-3 6-3.500 9-2s4-1 5-2v7.300h-14z" fill="#4a8a58"/><path d="M927.800 577.500c4-1 9-1 14-.5v2.300h-14z" fill="#2a5a78"/><path d="M927 616h14l5 5v21h-19z" fill="#fcfcfc" stroke="#c8c8c8" stroke-width=".6"/><path d="M941 616v5h5z" fill="#d8d8d8"/><path d="M936 623h8M929 627h15M929 636h15M929 639h15" stroke="#2a78d8" stroke-width="1"/><path d="M929 630.500h6M929 633h6" stroke="#9a9a9a" stroke-width="1"/><rect x="937" y="629.500" width="7" height="5" fill="#3a6a98"/><path d="M929.500 625l2-5.500l2 5.500M930.300 623.300h2.400" stroke="#2a68c8" stroke-width="1.100" fill="none"/><path d="M930.600 677.600L951.300 683.500L950.600 696.500L931.800 690.600z" fill="#35a8f5"/><path d="M930.600 677.600L951.300 683.500L951.100 686L930.800 680z" fill="#7accfb"/><path d="M940 694l6 2l-.5 3.500l-6-1.500z" fill="#c8c8c8"/><path d="M922.400 700L936.500 696.500L948.200 700L935.300 704.200z" fill="#e4e4e4"/><path d="M926 700l10-2.500M929 701l10-2.500M932 702l10-2.500" stroke="#bdbdbd" stroke-width=".6"/><circle cx="941.600" cy="748.200" r="9" fill="#4a94c0"/><path d="M936 742c3-2.500 7-3 10-1c-3 1-4 3-2 5s5 2 5 5c-1 3-5 5-9 4c2-3 1-5-2-6s-3-4-2-7z" fill="#9ad0ea"/><path d="M923.500 747L942.400 751.800L941.600 763.500L924.700 759.300z" fill="#35a8f5"/><path d="M923.500 747L942.400 751.800L942.200 754L923.700 749.200z" fill="#7accfb"/><path d="M931 761.500l5 1.500v2.500l-5-1.500z" fill="#c0c0c0"/><path d="M927 765l9 2.500l3-1l-9-2.500z" fill="#dcdcdc"/><path d="M926 803h9v26l-9-3z" fill="#f8d868"/><path d="M935 803l6 4v22l-6 0z" fill="#e8b840"/><path d="M945 810l2.500 6h6.500l-5 4l2 6.500l-6-4l-6 4l2-6.500l-5-4h6.500z" fill="#fbc02d" stroke="#f09020" stroke-width=".6"/><rect x="923" y="867" width="28" height="20" fill="#1e9cf4"/><path d="M923 887l28-20v20z" fill="#35a8f8"/><rect x="925" y="884" width="6" height="1" fill="#cfe8ff"/><rect x="944" y="884" width="5" height="1" fill="#cfe8ff"/></svg>
<div class="b" style="left:999px;top:544px;width:473px;height:310px;background:#fff;"></div>
<div class="b" style="left:1270px;top:544px;width:1px;height:310px;background:#e5eef8;"></div>
<div class="b" style="left:1414px;top:544px;width:1px;height:310px;background:#e5eef8;"></div>
<span class="t " style="left:1005px;top:549px;font-size:12px;line-height:16px;color:#000;letter-spacing:-0.003px;">Name</span>
<span class="t " style="left:1277px;top:549px;font-size:12px;line-height:16px;color:#000;letter-spacing:0.080px;">Date modified</span>
<span class="t " style="left:1421px;top:549px;font-size:12px;line-height:16px;color:#000;transform:scaleX(0.9225);transform-origin:0 50%;">Type</span>
<svg class="b" style="left:1131px;top:545px;" width="10" height="6" viewBox="0 0 10 6"><path d="M1.500 4.500l3.500-3l3.500 3" stroke="#555" stroke-width="1" fill="none"/></svg>
<div class="b" style="left:1003px;top:570px;width:469px;height:18px;background:#d9d9d9;"></div>
<svg class="b" style="left:1008px;top:571px;" width="13" height="16" viewBox="0 0 13 16"><path d="M1.500 1.500h7l3 3v10h-10z" fill="#fff" stroke="#8a8a8a" stroke-width="1"/><path d="M3.500 5h5M3.500 7h6M3.500 9h6M3.500 11h6M3.500 13h6" stroke="#8a8a8a" stroke-width=".8"/></svg>
<span class="t " style="left:1025px;top:571.5px;font-size:11px;line-height:15px;color:#000;letter-spacing:0.258px;">Step3_Complex_Model_SPF.txt</span>
<span class="t " style="left:1277px;top:571.5px;font-size:11px;line-height:15px;color:#000;letter-spacing:0.231px;">21/08/2023 5:13 PM</span>
<span class="t " style="left:1421px;top:571.5px;font-size:11px;line-height:15px;color:#000;letter-spacing:0.261px;">Text Docu</span>
<div class="b" style="left:999px;top:854px;width:473px;height:15px;background:#f0f0f0;"></div>
<div class="b" style="left:1016px;top:854px;width:337px;height:15px;background:#cdcdcd;"></div>
<svg class="b" style="left:1002px;top:856px;" width="10" height="11" viewBox="0 0 10 11"><path d="M7 1.500l-4 4l4 4" stroke="#555" stroke-width="1.600" fill="none"/></svg>
<svg class="b" style="left:1459px;top:856px;" width="10" height="11" viewBox="0 0 10 11"><path d="M3 1.500l4 4l-4 4" stroke="#555" stroke-width="1.600" fill="none"/></svg>
<span class="t " style="left:1020px;top:879.5px;font-size:11px;line-height:15px;color:#000;transform:scaleX(0.9542);transform-origin:0 50%;">File name:</span>
<div class="b" style="left:1076px;top:876px;width:398px;height:21px;background:#fff;border:1px solid #7a7a7a;"></div>
<span class="t " style="left:1081px;top:878.5px;font-size:11px;line-height:15px;color:#000;letter-spacing:-0.127px;">Step3_Complex_Model_SPF.txt</span>
<svg class="b" style="left:1459px;top:883px;" width="12" height="8" viewBox="0 0 12 8"><path d="M1.500 1.500l4.500 4.500l4.500-4.500" stroke="#444" stroke-width="1.100" fill="none"/></svg>
<span class="t " style="left:1006px;top:903.5px;font-size:11px;line-height:15px;color:#000;letter-spacing:0.049px;">Files of type:</span>
<div class="b" style="left:1076px;top:901px;width:398px;height:21px;background:#e1e1e1;border:1px solid #adadad;"></div>
<span class="t " style="left:1079px;top:904.5px;font-size:11px;line-height:15px;color:#000;letter-spacing:0.052px;">Shared Parameter Files (*.txt)</span>
<svg class="b" style="left:1459px;top:908px;" width="12" height="8" viewBox="0 0 12 8"><path d="M1.500 1.500l4.500 4.500l4.500-4.500" stroke="#444" stroke-width="1.100" fill="none"/></svg>
<div class="b" style="left:885px;top:931px;width:88px;height:21px;background:#e1e1e1;border:1px solid #adadad;"></div>
<span class="t " style="left:907px;top:933.5px;font-size:11px;line-height:15px;color:#000;letter-spacing:0.081px;">Tools</span>
<div class="b" style="left:926px;top:947px;width:1px;height:1px;background:#000;"></div>
<svg class="b" style="left:961px;top:938px;" width="10" height="7" viewBox="0 0 10 7"><path d="M1 1h8l-4 4.500z" fill="#000"/></svg>
<div class="b" style="left:1479px;top:546px;width:158px;height:147px;border:1px solid #dcdcdc;"></div>
<div class="b" style="left:1485px;top:541px;width:42px;height:10px;background:#f0f0f0;"></div>
<span class="t " style="left:1487px;top:539.5px;font-size:11px;line-height:15px;color:#000;transform:scaleX(0.9713);transform-origin:0 50%;">Preview</span>
<div class="b" style="left:1430px;top:932px;width:92px;height:20px;background:#e1e1e1;border:1px solid #adadad;"></div>
<span class="t " style="left:1462px;top:933.5px;font-size:11px;line-height:15px;color:#000;transform:scaleX(0.9662);transform-origin:0 50%;">Open</span>
<div class="b" style="left:1462px;top:947px;width:8px;height:1px;background:#000;"></div>
<div class="b" style="left:1540px;top:931px;width:96px;height:21px;background:#e1e1e1;border:1px solid #adadad;"></div>
<span class="t " style="left:1571px;top:934.5px;font-size:11px;line-height:15px;color:#000;transform:scaleX(0.9346);transform-origin:0 50%;">Cancel</span>
<svg class="b" style="left:1637px;top:954px;" width="9" height="9" viewBox="0 0 9 9"><path d="M7 1v1M5 3v1M7 3v1M3 5v1M5 5v1M7 5v1M1 7v1M3 7v1M5 7v1M7 7v1" stroke="#b8b8b8" stroke-width="1.400"/></svg>
<div class="b" style="left:1001px;top:568px;width:473px;height:20px;border:2px solid #f8444a;box-shadow:0 2px 4px rgba(0,0,0,.4),inset 0 1px 4px rgba(0,0,0,.4);"></div>
<div class="b" style="left:1429px;top:931px;width:94px;height:21px;border:2px solid #f8444a;box-shadow:0 2px 4px rgba(0,0,0,.4),inset 0 1px 4px rgba(0,0,0,.4);"></div>
<div class="b" style="left:1486px;top:558px;width:40px;height:40px;border-radius:50%;background:#fa4246;box-shadow:0 2px 5px rgba(0,0,0,.45);"></div><span class="t " style="left:1497.5px;top:561.5px;font-size:30px;line-height:34px;color:#fff;letter-spacing:0.314px;font-family:'Liberation Sans',sans-serif;">4</span>
<div class="b" style="left:1378px;top:922px;width:40px;height:40px;border-radius:50%;background:#fa4246;box-shadow:0 2px 5px rgba(0,0,0,.45);"></div><span class="t " style="left:1389.5px;top:925.5px;font-size:30px;line-height:34px;color:#fff;letter-spacing:0.314px;font-family:'Liberation Sans',sans-serif;">5</span>
<!-- p_status -->
<div class="b" style="left:0px;top:996px;width:1680px;height:24px;background:#3b4453;"></div>
<span class="t " style="left:1px;top:1001px;font-size:12px;line-height:16px;color:#fff;transform:scaleX(0.9225);transform-origin:0 50%;">Ready</span>
<svg class="b" style="left:0px;top:996px;" width="1680" height="24" viewBox="0 996 1680 24"><path d="M626 1002l4-2v8l-4 2z M631 1000l4 2v10l-4-2z M635 1006l3 1v6l-3 1z" fill="#8a919c"/><path d="M845 1007l3 3l3-3" stroke="#5a6474" stroke-width="1.400" fill="none"/><path d="M864 1011v-5h4v-4h6v4h-4v5z" fill="#aeb6c2"/><rect x="924" y="1002" width="14" height="13" rx="1" fill="#aeb6c2"/><path d="M926 1005h10M926 1008.500h10M926 1012h10" stroke="#3b4453" stroke-width="1.200"/><rect x="951" y="1001" width="13" height="11" fill="#aeb6c2"/><path d="M953 1004h9M953 1007h9M953 1010h5" stroke="#3b4453" stroke-width="1.100"/><path d="M950 1013h6v-2l4 3l-4 3v-2h-6z" fill="#aeb6c2"/><path d="M1168 1007l3 3l3-3" stroke="#5a6474" stroke-width="1.400" fill="none"/><path d="M1410 1001v12l3-2.500l2 4l2-1l-2-4h4z" fill="#d8dbe0"/><path d="M1405 1002h6M1406 1005h4" stroke="#d8dbe0" stroke-width="1.400"/><path d="M1437 1001v12l3-2.500l2 4l2-1l-2-4h4z" fill="#d8dbe0"/><path d="M1432 1002h6M1433 1005h4" stroke="#d8dbe0" stroke-width="1.400"/><path d="M1463 1001v12l3-2.500l2 4l2-1l-2-4h4z" fill="#d8dbe0"/><path d="M1458 1002h6M1459 1005h4" stroke="#d8dbe0" stroke-width="1.400"/><path d="M1489 1001v12l3-2.500l2 4l2-1l-2-4h4z" fill="#d8dbe0"/><path d="M1484 1002h6M1485 1005h4" stroke="#d8dbe0" stroke-width="1.400"/><path d="M1515 1001v12l3-2.500l2 4l2-1l-2-4h4z" fill="#d8dbe0"/><path d="M1510 1002h6M1511 1005h4" stroke="#d8dbe0" stroke-width="1.400"/><circle cx="1543" cy="1008" r="5.500" fill="none" stroke="#8a919c" stroke-width="2" stroke-dasharray="2 2"/><path d="M1560 1002h14l-5.500 6v7l-3-2v-5z" fill="#e8eaee"/></svg>
<span class="t " style="left:879px;top:1002.5px;font-size:11px;line-height:15px;color:#aeb6c2;">:0</span>
<span class="t " style="left:976px;top:1002px;font-size:12px;line-height:16px;color:#8a919c;letter-spacing:0.219px;">Main Model</span>
<span class="t " style="left:1577px;top:1002.5px;font-size:11px;line-height:15px;color:#e8eaee;">:0</span>
<!-- p_over -->
<div class="b" style="left:769px;top:29px;width:65px;height:20px;border:2px solid #f8444a;box-shadow:0 2px 4px rgba(0,0,0,.4),inset 0 1px 4px rgba(0,0,0,.4);"></div>
<div class="b" style="left:720px;top:19px;width:40px;height:40px;border-radius:50%;background:#fa4246;box-shadow:0 2px 5px rgba(0,0,0,.45);"></div><span class="t " style="left:731.5px;top:22.5px;font-size:30px;line-height:34px;color:#fff;letter-spacing:0.314px;font-family:'Liberation Sans',sans-serif;">1</span>
<div class="b" style="left:317px;top:77px;width:131px;height:24px;border:2px solid #f8444a;box-shadow:0 2px 4px rgba(0,0,0,.4),inset 0 1px 4px rgba(0,0,0,.4);"></div>
<div class="b" style="left:266px;top:69px;width:40px;height:40px;border-radius:50%;background:#fa4246;box-shadow:0 2px 5px rgba(0,0,0,.45);"></div><span class="t " style="left:277.5px;top:72.5px;font-size:30px;line-height:34px;color:#fff;letter-spacing:0.314px;font-family:'Liberation Sans',sans-serif;">2</span>
<svg class="b" style="left:1550px;top:205px;" width="105" height="110" viewBox="1550 205 105 110"><defs><filter id="bl" x="-30%" y="-30%" width="160%" height="160%"><feGaussianBlur stdDeviation="4"/></filter></defs><path d="M1567 240l35-18l37 18l-3 40l-34 22l-32-22z" fill="#0c0f15" opacity=".4" filter="url(#bl)" transform="translate(0,6)"/><path d="M1567 234.800L1602.200 218.400L1639 234.800L1602.200 256.500z" fill="#83868d"/><path d="M1567 234.800L1602.200 256.500L1602.200 296L1570 275.300z" fill="#797c84"/><path d="M1602.200 256.500L1639 234.800L1635.900 275.300L1602.200 296z" fill="#7d8088"/><path d="M1567 234.800L1602.200 256.500L1639 234.800M1602.200 256.500V296" stroke="#8d9097" stroke-width=".7" fill="none"/><path d="M1595.500 252l6.700-4l6.700 4v7.500l-6.700 4.200l-6.700-4.200z" fill="#7a7f8c"/></svg>
<span class="t " style="left:1594px;top:227.25px;font-size:8.5px;line-height:12px;color:#5c6069;transform:rotate(25deg) skewX(-20deg);">TOP</span>
<span class="t " style="left:1572.5px;top:259.5px;font-size:8px;line-height:12px;color:#5c6069;letter-spacing:-0.388px;transform:rotate(27deg) skewY(4deg);">FRONT</span>
<span class="t " style="left:1609px;top:260px;font-size:8px;line-height:12px;color:#5c6069;letter-spacing:0.028px;transform:rotate(-30deg);">RIGHT</span>
<svg class="b" style="left:1625px;top:312px;" width="40" height="124" viewBox="1625 312 40 124"><rect x="1629.500" y="317" width="31" height="113.500" rx="3.500" fill="#686c75" stroke="#8a8d94" stroke-width="1"/><circle cx="1654.700" cy="322" r="3.300" fill="#2e323a"/><path d="M1653.300 320.600l2.800 2.800M1656.100 320.600l-2.800 2.800" stroke="#e8eaee" stroke-width=".9"/><path d="M1634.500 343a6 6 0 0 1 6-6h10a5 5 0 0 1 5 5v3a12 12 0 0 1-21 6z" fill="#c9ccd1" stroke="#e2e4e8" stroke-width=".8"/><circle cx="1645" cy="347" r="7" fill="#8e9299"/><circle cx="1645" cy="346" r="4.800" fill="#b9bcc2"/><path d="M1639 354l4-3.500M1651 354l-4-3.500" stroke="#c9ccd1" stroke-width="1.200" fill="none"/><path d="M1641.500 366h6l-3 3z" fill="#50545d"/><path d="M1632 373.500h26" stroke="#858991" stroke-width="1"/><rect x="1637.500" y="382.500" width="10" height="10" fill="#6a9a5c" stroke="#9ac88a" stroke-width=".8"/><circle cx="1648" cy="392.500" r="2.600" fill="#d6d9de" stroke="#50545d" stroke-width=".7"/><path d="M1650 394.500l2.500 2.500" stroke="#c8cacf" stroke-width="1.300"/><path d="M1641.500 408h6l-3 3z" fill="#50545d"/><circle cx="1654.700" cy="424.700" r="3.300" fill="#2e323a"/><path d="M1653 423.800h3.400M1653.500 425.200h2.400" stroke="#e8eaee" stroke-width=".8"/></svg>
</body></html>
